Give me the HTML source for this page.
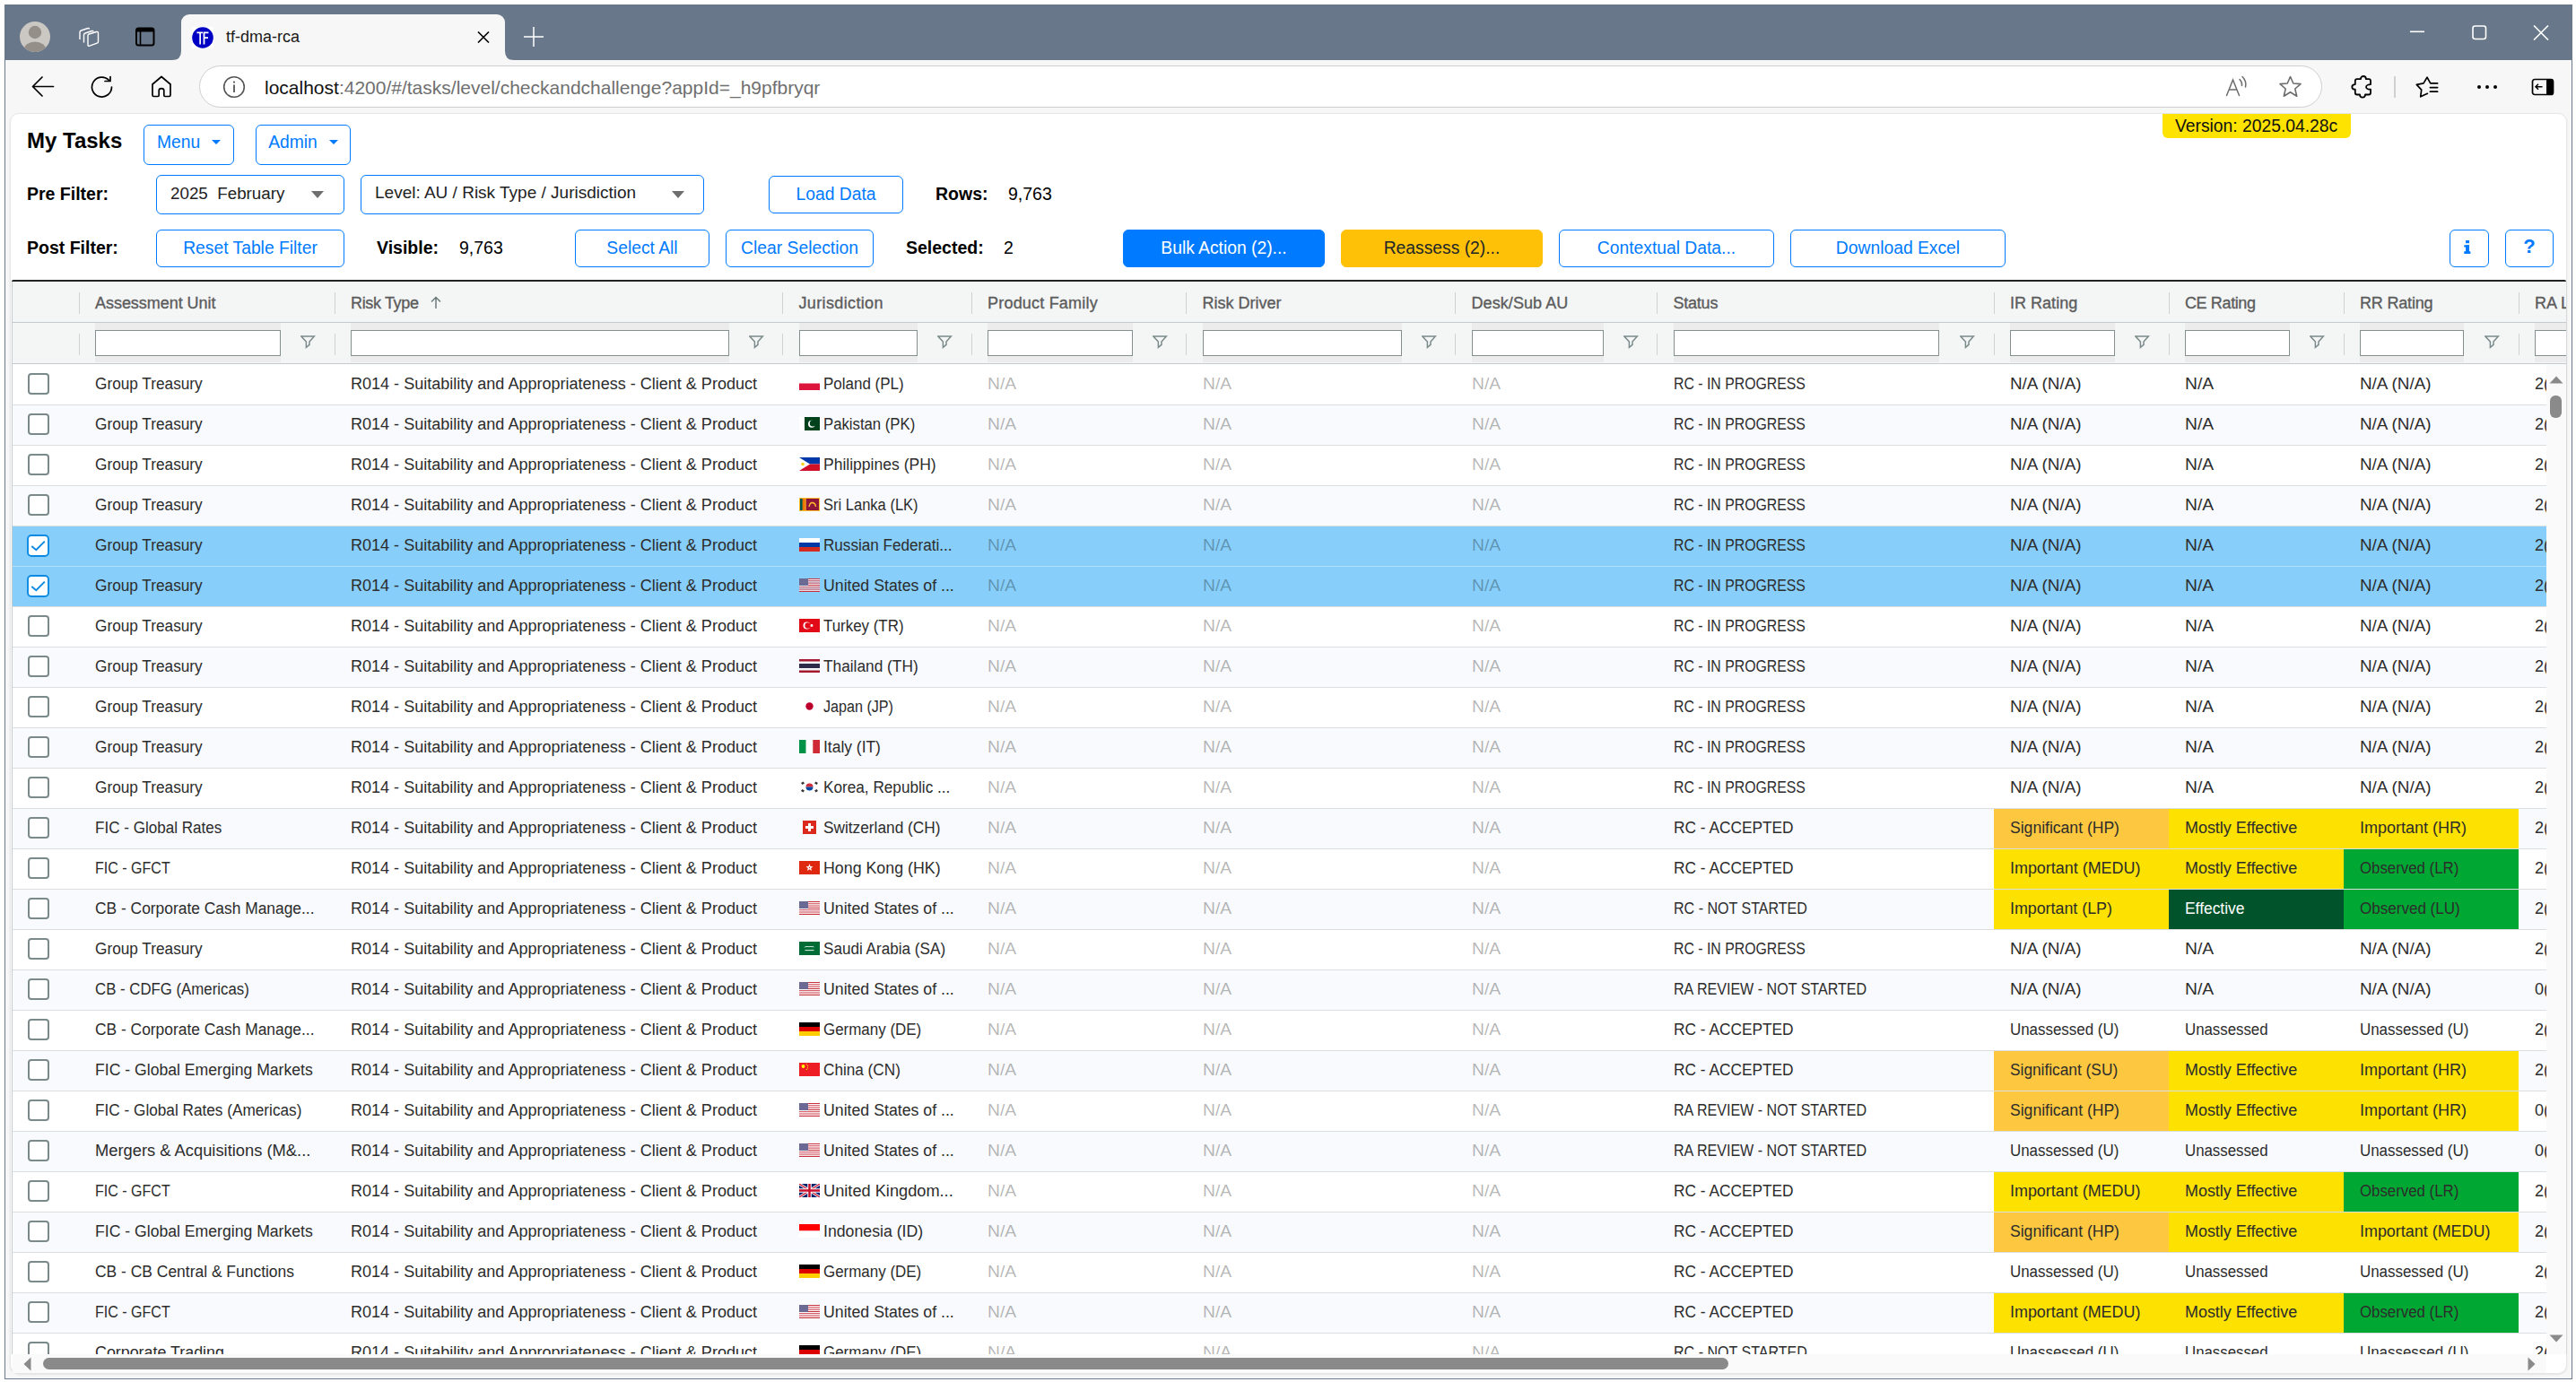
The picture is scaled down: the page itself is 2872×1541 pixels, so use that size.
<!DOCTYPE html>
<html><head><meta charset="utf-8"><title>tf-dma-rca</title>
<style>
*{box-sizing:border-box;margin:0;padding:0}
html,body{width:2872px;height:1541px;overflow:hidden;background:#fff;font-family:"Liberation Sans",sans-serif}
.abs{position:absolute}
#win{position:absolute;left:5px;top:5px;width:2863px;height:1533px;background:#f7f7f7;border:1px solid #6b7a8f;border-top:none}
#tabstrip{position:absolute;left:5px;top:5px;width:2863px;height:62px;background:#687789}
#tab{position:absolute;left:202px;top:16px;width:361px;height:52px;background:#f7f7f7;border-radius:9px 9px 0 0}
#toolbar{position:absolute;left:6px;top:67px;width:2861px;height:60px;background:#f7f7f7}
#addr{position:absolute;left:222px;top:73px;width:2367px;height:47px;border:1px solid #cfcfcf;border-radius:24px;background:#fff}
#panel{position:absolute;left:11px;top:126px;width:2851px;height:1406px;background:#fff;border-radius:10px;border:1px solid #e6e6e6;overflow:hidden;box-shadow:0 1px 2px rgba(0,0,0,0.08)}
.btn{position:absolute;border:1.5px solid #007bff;border-radius:6px;color:#007bff;font-size:19.3px;text-align:center;background:#fff;white-space:nowrap}
.lbl{position:absolute;font-weight:bold;font-size:19.5px;color:#000;white-space:nowrap}
.val{position:absolute;font-size:19.5px;color:#000;white-space:nowrap}
.sel{position:absolute;border:1.5px solid #007bff;border-radius:6px;background:#fff;font-size:19.5px;color:#222;white-space:nowrap}
.hd{position:absolute;top:328px;font-size:18px;color:#5c5c5c;-webkit-text-stroke:0.35px #5c5c5c;white-space:nowrap}
.td{position:absolute;font-size:18px;color:#2c2c2c;white-space:nowrap;line-height:41px}
.cb{position:absolute;left:17px;width:24px;height:24px;border:2px solid #7a8989;border-radius:4px;background:#fff}
.caret{position:absolute;width:0;height:0;border-left:7px solid transparent;border-right:7px solid transparent;border-top:8px solid #6e6e6e}
</style></head>
<body>
<div id="tabstrip"></div>
<div id="toolbar"></div>
<div class="abs" style="left:5px;top:67px;width:1px;height:1471px;background:#6b7a8f"></div>
<div class="abs" style="left:2867px;top:67px;width:1px;height:1471px;background:#6b7a8f"></div>
<div class="abs" style="left:5px;top:1537px;width:2863px;height:1px;background:#6b7a8f"></div>
<div class="abs" style="left:6px;top:127px;width:2861px;height:1410px;background:#f7f7f7"></div>
<div id="tab"></div>
<svg class="abs" style="left:192px;top:57px" width="10" height="10"><path d="M0 10 Q10 10 10 0 L10 10Z" fill="#f7f7f7"/></svg>
<svg class="abs" style="left:563px;top:57px" width="10" height="10"><path d="M10 10 Q0 10 0 0 L0 10Z" fill="#f7f7f7"/></svg>
<svg class="abs" style="left:21px;top:23px" width="36" height="36" viewBox="0 0 36 36"><defs><clipPath id="avc"><circle cx="18" cy="18" r="17"/></clipPath></defs><circle cx="18" cy="18" r="17" fill="#cbc8c4"/><g clip-path="url(#avc)"><circle cx="18" cy="13" r="7.2" fill="#958f8a"/><ellipse cx="18" cy="33" rx="12.5" ry="9.5" fill="#958f8a"/></g></svg>
<svg class="abs" style="left:86px;top:28px" width="27" height="26" viewBox="0 0 27 26" fill="none" stroke="#fff" stroke-width="1.4" stroke-linejoin="round"><path d="M3 16 V8 Q3 6.5 4.5 6 L12 3.5 Q13.5 3.2 13.5 4.5"/><path d="M7.5 19.5 V11 Q7.5 9.5 9 9 L16.5 6.5 Q18 6.2 18 7.5"/><path d="M12 11.5 Q12 10.5 13.2 10 L21.5 7.5 Q23.5 7 23.5 8.8 V18.5 Q23.5 19.8 22.2 20.2 L13.8 23.2 Q12 23.8 12 22 Z"/></svg>
<svg class="abs" style="left:150px;top:30px" width="24" height="22" viewBox="0 0 24 22"><rect x="2" y="1.5" width="19.5" height="19" rx="2.5" fill="none" stroke="#000" stroke-width="2"/><rect x="2" y="1.5" width="19.5" height="4" fill="#000"/><line x1="6.5" y1="5" x2="6.5" y2="20" stroke="#000" stroke-width="1.6"/></svg>
<div class="abs" style="left:214px;top:30px;width:24px;height:24px;background:#fff"></div>
<svg class="abs" style="left:214px;top:30px" width="24" height="24" viewBox="0 0 24 24"><circle cx="12" cy="12" r="11.8" fill="#0000c4"/><path d="M5.5 5.5 H12 V7.2 H10 V19.5 H8.3 V7.2 H5.5Z" fill="#fff"/><path d="M12.6 5.5 H18.5 V7.2 H14.4 V11.3 H18 V13 H14.4 V19.5 H12.6Z" fill="#fff"/></svg>
<div class="abs" style="left:252px;top:31px;font-size:18px;color:#1a1a1a;white-space:nowrap">tf-dma-rca</div>
<svg class="abs" style="left:532px;top:35px" width="14" height="13" viewBox="0 0 14 13"><path d="M1 0.5 L13 12.5 M13 0.5 L1 12.5" stroke="#000" stroke-width="1.6"/></svg>
<svg class="abs" style="left:584px;top:30px" width="22" height="22" viewBox="0 0 22 22"><path d="M11 0 V22 M0 11 H22" stroke="#fff" stroke-width="1.5"/></svg>
<svg class="abs" style="left:2687px;top:34px" width="17" height="3"><rect x="0" y="0.5" width="16" height="1.6" fill="#fff"/></svg>
<svg class="abs" style="left:2756px;top:28px" width="17" height="17" viewBox="0 0 17 17"><rect x="1" y="1" width="14.5" height="14.5" rx="2.5" fill="none" stroke="#fff" stroke-width="1.6"/></svg>
<svg class="abs" style="left:2824px;top:28px" width="18" height="17" viewBox="0 0 18 17"><path d="M1 0.5 L17 16.5 M17 0.5 L1 16.5" stroke="#fff" stroke-width="1.6"/></svg>
<svg class="abs" style="left:35px;top:85px" width="26" height="23" viewBox="0 0 26 23" fill="none" stroke="#000" stroke-width="1.7" stroke-linecap="round" stroke-linejoin="round"><path d="M12 1 L1.5 11.5 L12 22 M1.5 11.5 H24.5"/></svg>
<svg class="abs" style="left:101px;top:84px" width="27" height="26" viewBox="0 0 27 26" fill="none" stroke="#000" stroke-width="1.7" stroke-linecap="round" stroke-linejoin="round"><path d="M23.5 13 A11 11 0 1 1 20.5 5.5"/><path d="M22 1.5 V6.5 H16"/></svg>
<svg class="abs" style="left:168px;top:84px" width="24" height="25" viewBox="0 0 24 25" fill="none" stroke="#000" stroke-width="1.7" stroke-linejoin="round"><path d="M2 10 L12 1.5 L22 10 V22 Q22 23.5 20.5 23.5 H16 Q14.8 23.5 14.8 22.3 V17 Q14.8 14.6 12 14.6 Q9.2 14.6 9.2 17 V22.3 Q9.2 23.5 8 23.5 H3.5 Q2 23.5 2 22 Z"/></svg>
<div id="addr"></div>
<svg class="abs" style="left:248px;top:84px" width="26" height="26" viewBox="0 0 26 26"><circle cx="13" cy="13" r="11.3" fill="none" stroke="#555" stroke-width="1.6"/><rect x="12.1" y="10.5" width="1.8" height="8.5" fill="#555"/><circle cx="13" cy="7.6" r="1.15" fill="#555"/></svg>
<div class="abs" style="left:295px;top:86px;font-size:21px;white-space:nowrap;color:#6f6f6f"><span style="color:#111">localhost</span>:4200/#/tasks/level/checkandchallenge?appId=_h9pfbryqr</div>
<svg class="abs" style="left:2481px;top:84px" width="26" height="24" viewBox="0 0 26 24" fill="none" stroke="#6d6d6d" stroke-width="1.5" stroke-linecap="round"><path d="M1.5 22.5 L8.5 5 L15.5 22.5 M4.3 16 H12.7"/><path d="M16 4.5 Q19 7.5 18.5 11.5"/><path d="M19 1.5 Q24 6.5 22.5 13"/></svg>
<svg class="abs" style="left:2540px;top:84px" width="27" height="26" viewBox="0 0 27 26" fill="none" stroke="#6d6d6d" stroke-width="1.6" stroke-linejoin="round"><path d="M13.5 1.5 L16.8 9 L25 9.6 L18.8 15 L20.7 23.2 L13.5 18.8 L6.3 23.2 L8.2 15 L2 9.6 L10.2 9 Z"/></svg>
<svg class="abs" style="left:2620px;top:84px" width="27" height="27" viewBox="0 0 27 27" fill="none" stroke="#000" stroke-width="1.8" stroke-linejoin="round"><path d="M5.8 6.2 Q5.8 4.2 7.8 4.2 H11.9 A3 3.2 0 0 1 17.9 4.2 H21 Q23 4.2 23 6.2 V10.1 A5 2.8 0 0 0 23 15.7 V19.5 Q23 21.5 21 21.5 H17 A3 3.2 0 0 1 11 21.5 H7.8 Q5.8 21.5 5.8 19.5 V15.7 A3.5 2.8 0 0 1 5.8 10.1 Z"/></svg>
<div class="abs" style="left:2669px;top:85px;width:2px;height:24px;background:#d0d0d0"></div>
<svg class="abs" style="left:2692px;top:84px" width="28" height="26" viewBox="0 0 28 26" fill="none" stroke="#000" stroke-width="1.7" stroke-linejoin="round" stroke-linecap="round"><path d="M25.6 8.9 H17.7 L14 2.2 L10 8.9 L2.3 10.3 L7.7 16.1 L6.7 23.8 L14.4 20.3 M17.4 13.6 H25.6 M17.4 18.2 H25.6"/></svg>
<svg class="abs" style="left:2761px;top:94px" width="24" height="6"><circle cx="3" cy="3" r="2" fill="#000"/><circle cx="12" cy="3" r="2" fill="#000"/><circle cx="21" cy="3" r="2" fill="#000"/></svg>
<svg class="abs" style="left:2822px;top:87px" width="26" height="20" viewBox="0 0 26 20"><rect x="1.5" y="1.5" width="23" height="17" rx="2.5" fill="none" stroke="#000" stroke-width="1.7"/><rect x="17" y="1.5" width="7.5" height="17" rx="1" fill="#000"/><path d="M5 9.8 H12.5 M8 6.8 L5 9.8 L8 12.8" fill="none" stroke="#000" stroke-width="1.5"/></svg>
<div id="panel"></div>
<div class="abs" style="left:2411px;top:127px;width:210px;height:27px;background:#ffe300;border-radius:0 0 6px 6px"></div>
<div class="abs" style="left:2425px;top:130px;font-size:19.3px;color:#111;white-space:nowrap">Version: 2025.04.28c</div>
<div class="abs" style="left:30px;top:143px;font-size:24px;font-weight:bold;color:#000;white-space:nowrap">My Tasks</div>
<div class="btn" style="left:160px;top:139px;width:101px;height:45px;line-height:38px;">Menu<span style="display:inline-block;width:0;height:0;border-left:5px solid transparent;border-right:5px solid transparent;border-top:5.5px solid #007bff;vertical-align:4px;margin-left:13px"></span></div>
<div class="btn" style="left:285px;top:139px;width:106px;height:45px;line-height:38px;">Admin<span style="display:inline-block;width:0;height:0;border-left:5px solid transparent;border-right:5px solid transparent;border-top:5.5px solid #007bff;vertical-align:4px;margin-left:13px"></span></div>
<div class="lbl" style="left:30px;top:205px">Pre Filter:</div>
<div class="lbl" style="left:30px;top:265px">Post Filter:</div>
<div class="sel" style="left:174px;top:195px;width:210px;height:44px"></div>
<div class="abs" style="left:190px;top:204.5px;font-size:18.8px;color:#222;white-space:pre">2025  February</div>
<div class="caret" style="left:347px;top:213px"></div>
<div class="sel" style="left:402px;top:195px;width:383px;height:44px"></div>
<div class="abs" style="left:418px;top:204px;font-size:19px;color:#222;white-space:pre">Level: AU / Risk Type / Jurisdiction</div>
<div class="caret" style="left:749px;top:213px"></div>
<div class="btn" style="left:857px;top:196px;width:150px;height:42px;line-height:39px;">Load Data</div>
<div class="lbl" style="left:1043px;top:205px">Rows:</div>
<div class="val" style="left:1124px;top:205px">9,763</div>
<div class="btn" style="left:174px;top:256px;width:210px;height:42px;line-height:39px;">Reset Table Filter</div>
<div class="lbl" style="left:420px;top:265px">Visible:</div>
<div class="val" style="left:512px;top:265px">9,763</div>
<div class="btn" style="left:641px;top:256px;width:150px;height:42px;line-height:39px;">Select All</div>
<div class="btn" style="left:809px;top:256px;width:165px;height:42px;line-height:39px;">Clear Selection</div>
<div class="lbl" style="left:1010px;top:265px">Selected:</div>
<div class="val" style="left:1119px;top:265px">2</div>
<div class="btn" style="left:1252px;top:256px;width:225px;height:42px;line-height:39px;background:#007bff;color:#fff">Bulk Action (2)...</div>
<div class="btn" style="left:1495px;top:256px;width:225px;height:42px;line-height:39px;background:#ffc107;border-color:#ffc107;color:#212529">Reassess (2)...</div>
<div class="btn" style="left:1738px;top:256px;width:240px;height:42px;line-height:39px;">Contextual Data...</div>
<div class="btn" style="left:1996px;top:256px;width:240px;height:42px;line-height:39px;">Download Excel</div>
<div class="btn" style="left:2731px;top:256px;width:44px;height:42px;line-height:39px;"></div>
<svg class="abs" style="left:2746px;top:267px" width="10" height="17" viewBox="0 0 10 17" fill="#007bff"><rect x="3" y="1" width="4" height="3.2"/><rect x="1.2" y="6.3" width="5.8" height="2.2"/><rect x="3" y="6.3" width="4" height="9.5"/><rect x="1.2" y="13.2" width="7.2" height="2.7" rx="0.5"/></svg>
<div class="btn" style="left:2793px;top:256px;width:54px;height:42px;line-height:39px;"><b style="font-family:'Liberation Mono',monospace;font-size:22px;position:relative;top:-1px">?</b></div>
<div class="abs" style="left:13px;top:312px;width:2848px;height:2px;background:#222;border-radius:2px 2px 0 0"></div>
<div class="abs" style="left:13px;top:314px;width:2848px;height:91px;background:#f4f6f6"></div>
<div class="abs" style="left:13px;top:359px;width:2848px;height:1px;background:#c3cbce"></div>
<div class="abs" style="left:13px;top:405px;width:2848px;height:1px;background:#c3cbce"></div>
<div class="abs" style="left:13px;top:314px;width:1px;height:1196px;background:#c5cccf"></div>
<div class="abs" style="left:0;top:0;width:2861px;height:406px;overflow:hidden">
<div class="abs" style="left:87.5px;top:326px;width:1px;height:24px;background:#cdd2d5"></div>
<div class="abs" style="left:87.5px;top:372px;width:1px;height:24px;background:#cdd2d5"></div>
<div class="hd" style="left:106.0px;letter-spacing:-0.039px;">Assessment Unit</div>
<div class="abs" style="left:106.0px;top:360px;width:206.7px;height:44px;background:#ececec"></div>
<div class="abs" style="left:106.0px;top:368px;width:206.7px;height:29px;background:#fff;border:1px solid #84908f"></div>
<svg class="abs" style="left:335.2px;top:374px" width="17" height="15" viewBox="0 0 17 15"><path d="M0.9 1.1 H15.3 L10 7 V10.4 L6.4 13.4 V7 Z" fill="none" stroke="#7b8a8a" stroke-width="1.5" stroke-linejoin="miter"/></svg>
<div class="abs" style="left:372.5px;top:326px;width:1px;height:24px;background:#cdd2d5"></div>
<div class="abs" style="left:372.5px;top:372px;width:1px;height:24px;background:#cdd2d5"></div>
<div class="hd" style="left:391.0px;letter-spacing:-0.351px;">Risk Type</div>
<div class="abs" style="left:391.0px;top:360px;width:421.6px;height:44px;background:#ececec"></div>
<div class="abs" style="left:391.0px;top:368px;width:421.6px;height:29px;background:#fff;border:1px solid #84908f"></div>
<svg class="abs" style="left:835.1px;top:374px" width="17" height="15" viewBox="0 0 17 15"><path d="M0.9 1.1 H15.3 L10 7 V10.4 L6.4 13.4 V7 Z" fill="none" stroke="#7b8a8a" stroke-width="1.5" stroke-linejoin="miter"/></svg>
<div class="abs" style="left:872.0px;top:326px;width:1px;height:24px;background:#cdd2d5"></div>
<div class="abs" style="left:872.0px;top:372px;width:1px;height:24px;background:#cdd2d5"></div>
<div class="hd" style="left:890.5px;letter-spacing:0.361px;">Jurisdiction</div>
<div class="abs" style="left:890.5px;top:360px;width:132.1px;height:44px;background:#ececec"></div>
<div class="abs" style="left:890.5px;top:368px;width:132.1px;height:29px;background:#fff;border:1px solid #84908f"></div>
<svg class="abs" style="left:1045.1px;top:374px" width="17" height="15" viewBox="0 0 17 15"><path d="M0.9 1.1 H15.3 L10 7 V10.4 L6.4 13.4 V7 Z" fill="none" stroke="#7b8a8a" stroke-width="1.5" stroke-linejoin="miter"/></svg>
<div class="abs" style="left:1082.5px;top:326px;width:1px;height:24px;background:#cdd2d5"></div>
<div class="abs" style="left:1082.5px;top:372px;width:1px;height:24px;background:#cdd2d5"></div>
<div class="hd" style="left:1101.0px;letter-spacing:0.205px;">Product Family</div>
<div class="abs" style="left:1101.0px;top:360px;width:161.7px;height:44px;background:#ececec"></div>
<div class="abs" style="left:1101.0px;top:368px;width:161.7px;height:29px;background:#fff;border:1px solid #84908f"></div>
<svg class="abs" style="left:1285.2px;top:374px" width="17" height="15" viewBox="0 0 17 15"><path d="M0.9 1.1 H15.3 L10 7 V10.4 L6.4 13.4 V7 Z" fill="none" stroke="#7b8a8a" stroke-width="1.5" stroke-linejoin="miter"/></svg>
<div class="abs" style="left:1322.0px;top:326px;width:1px;height:24px;background:#cdd2d5"></div>
<div class="abs" style="left:1322.0px;top:372px;width:1px;height:24px;background:#cdd2d5"></div>
<div class="hd" style="left:1340.5px;letter-spacing:0px;">Risk Driver</div>
<div class="abs" style="left:1340.5px;top:360px;width:222.0px;height:44px;background:#ececec"></div>
<div class="abs" style="left:1340.5px;top:368px;width:222.0px;height:29px;background:#fff;border:1px solid #84908f"></div>
<svg class="abs" style="left:1585.0px;top:374px" width="17" height="15" viewBox="0 0 17 15"><path d="M0.9 1.1 H15.3 L10 7 V10.4 L6.4 13.4 V7 Z" fill="none" stroke="#7b8a8a" stroke-width="1.5" stroke-linejoin="miter"/></svg>
<div class="abs" style="left:1622.0px;top:326px;width:1px;height:24px;background:#cdd2d5"></div>
<div class="abs" style="left:1622.0px;top:372px;width:1px;height:24px;background:#cdd2d5"></div>
<div class="hd" style="left:1640.5px;letter-spacing:0.076px;">Desk/Sub AU</div>
<div class="abs" style="left:1640.5px;top:360px;width:147.0px;height:44px;background:#ececec"></div>
<div class="abs" style="left:1640.5px;top:368px;width:147.0px;height:29px;background:#fff;border:1px solid #84908f"></div>
<svg class="abs" style="left:1810.0px;top:374px" width="17" height="15" viewBox="0 0 17 15"><path d="M0.9 1.1 H15.3 L10 7 V10.4 L6.4 13.4 V7 Z" fill="none" stroke="#7b8a8a" stroke-width="1.5" stroke-linejoin="miter"/></svg>
<div class="abs" style="left:1847.0px;top:326px;width:1px;height:24px;background:#cdd2d5"></div>
<div class="abs" style="left:1847.0px;top:372px;width:1px;height:24px;background:#cdd2d5"></div>
<div class="hd" style="left:1865.5px;letter-spacing:-0.226px;">Status</div>
<div class="abs" style="left:1865.5px;top:360px;width:296.5px;height:44px;background:#ececec"></div>
<div class="abs" style="left:1865.5px;top:368px;width:296.5px;height:29px;background:#fff;border:1px solid #84908f"></div>
<svg class="abs" style="left:2184.5px;top:374px" width="17" height="15" viewBox="0 0 17 15"><path d="M0.9 1.1 H15.3 L10 7 V10.4 L6.4 13.4 V7 Z" fill="none" stroke="#7b8a8a" stroke-width="1.5" stroke-linejoin="miter"/></svg>
<div class="abs" style="left:2222.5px;top:326px;width:1px;height:24px;background:#cdd2d5"></div>
<div class="abs" style="left:2222.5px;top:372px;width:1px;height:24px;background:#cdd2d5"></div>
<div class="hd" style="left:2241.0px;letter-spacing:0.022px;">IR Rating</div>
<div class="abs" style="left:2241.0px;top:360px;width:116.6px;height:44px;background:#ececec"></div>
<div class="abs" style="left:2241.0px;top:368px;width:116.6px;height:29px;background:#fff;border:1px solid #84908f"></div>
<svg class="abs" style="left:2380.1px;top:374px" width="17" height="15" viewBox="0 0 17 15"><path d="M0.9 1.1 H15.3 L10 7 V10.4 L6.4 13.4 V7 Z" fill="none" stroke="#7b8a8a" stroke-width="1.5" stroke-linejoin="miter"/></svg>
<div class="abs" style="left:2417.5px;top:326px;width:1px;height:24px;background:#cdd2d5"></div>
<div class="abs" style="left:2417.5px;top:372px;width:1px;height:24px;background:#cdd2d5"></div>
<div class="hd" style="left:2436.0px;letter-spacing:-0.378px;">CE Rating</div>
<div class="abs" style="left:2436.0px;top:360px;width:116.5px;height:44px;background:#ececec"></div>
<div class="abs" style="left:2436.0px;top:368px;width:116.5px;height:29px;background:#fff;border:1px solid #84908f"></div>
<svg class="abs" style="left:2575.0px;top:374px" width="17" height="15" viewBox="0 0 17 15"><path d="M0.9 1.1 H15.3 L10 7 V10.4 L6.4 13.4 V7 Z" fill="none" stroke="#7b8a8a" stroke-width="1.5" stroke-linejoin="miter"/></svg>
<div class="abs" style="left:2612.5px;top:326px;width:1px;height:24px;background:#cdd2d5"></div>
<div class="abs" style="left:2612.5px;top:372px;width:1px;height:24px;background:#cdd2d5"></div>
<div class="hd" style="left:2631.0px;letter-spacing:-0.177px;">RR Rating</div>
<div class="abs" style="left:2631.0px;top:360px;width:116.0px;height:44px;background:#ececec"></div>
<div class="abs" style="left:2631.0px;top:368px;width:116.0px;height:29px;background:#fff;border:1px solid #84908f"></div>
<svg class="abs" style="left:2769.5px;top:374px" width="17" height="15" viewBox="0 0 17 15"><path d="M0.9 1.1 H15.3 L10 7 V10.4 L6.4 13.4 V7 Z" fill="none" stroke="#7b8a8a" stroke-width="1.5" stroke-linejoin="miter"/></svg>
<div class="abs" style="left:2807.5px;top:326px;width:1px;height:24px;background:#cdd2d5"></div>
<div class="abs" style="left:2807.5px;top:372px;width:1px;height:24px;background:#cdd2d5"></div>
<div class="hd" style="left:2826.0px;letter-spacing:0px;">RA L</div>
<div class="abs" style="left:2826.0px;top:360px;width:124.0px;height:44px;background:#ececec"></div>
<div class="abs" style="left:2826.0px;top:368px;width:124.0px;height:29px;background:#fff;border:1px solid #84908f"></div>
<svg class="abs" style="left:2972.5px;top:374px" width="17" height="15" viewBox="0 0 17 15"><path d="M0.9 1.1 H15.3 L10 7 V10.4 L6.4 13.4 V7 Z" fill="none" stroke="#7b8a8a" stroke-width="1.5" stroke-linejoin="miter"/></svg>
</div>
<svg class="abs" style="left:480px;top:330px" width="12" height="15" viewBox="0 0 12 15" fill="none" stroke="#6d7b7b" stroke-width="1.5"><path d="M6 14 V1.5 M1 6.5 L6 1.5 L11 6.5"/></svg>
<div class="abs" style="left:14px;top:406px;width:2825px;height:1104px;overflow:hidden">
<div class="abs" style="left:0;top:0px;width:2825px;height:45px;background:#fff"></div>
<div class="abs" style="left:1px"></div>
<div class="abs" style="left:0;top:45px;width:2825px;height:45px;background:#f9fafd"></div>
<div class="abs" style="left:46px"></div>
<div class="abs" style="left:0;top:90px;width:2825px;height:45px;background:#fff"></div>
<div class="abs" style="left:91px"></div>
<div class="abs" style="left:0;top:135px;width:2825px;height:45px;background:#f9fafd"></div>
<div class="abs" style="left:136px"></div>
<div class="abs" style="left:0;top:180px;width:2825px;height:45px;background:#87cefa"></div>
<div class="abs" style="left:181px"></div>
<div class="abs" style="left:0;top:225px;width:2825px;height:45px;background:#87cefa"></div>
<div class="abs" style="left:226px"></div>
<div class="abs" style="left:0;top:270px;width:2825px;height:45px;background:#fff"></div>
<div class="abs" style="left:271px"></div>
<div class="abs" style="left:0;top:315px;width:2825px;height:45px;background:#f9fafd"></div>
<div class="abs" style="left:316px"></div>
<div class="abs" style="left:0;top:360px;width:2825px;height:45px;background:#fff"></div>
<div class="abs" style="left:361px"></div>
<div class="abs" style="left:0;top:405px;width:2825px;height:45px;background:#f9fafd"></div>
<div class="abs" style="left:406px"></div>
<div class="abs" style="left:0;top:450px;width:2825px;height:45px;background:#fff"></div>
<div class="abs" style="left:451px"></div>
<div class="abs" style="left:0;top:495px;width:2825px;height:45px;background:#f9fafd"></div>
<div class="abs" style="left:2208.5px;top:495px;width:195.0px;height:45px;background:#fdc83f"></div>
<div class="abs" style="left:2403.5px;top:495px;width:195.0px;height:45px;background:#fde100"></div>
<div class="abs" style="left:2598.5px;top:495px;width:195.0px;height:45px;background:#fde100"></div>
<div class="abs" style="left:496px"></div>
<div class="abs" style="left:0;top:540px;width:2825px;height:45px;background:#fff"></div>
<div class="abs" style="left:2208.5px;top:540px;width:195.0px;height:45px;background:#fde100"></div>
<div class="abs" style="left:2403.5px;top:540px;width:195.0px;height:45px;background:#fde100"></div>
<div class="abs" style="left:2598.5px;top:540px;width:195.0px;height:45px;background:#00a833"></div>
<div class="abs" style="left:541px"></div>
<div class="abs" style="left:0;top:585px;width:2825px;height:45px;background:#f9fafd"></div>
<div class="abs" style="left:2208.5px;top:585px;width:195.0px;height:45px;background:#fde100"></div>
<div class="abs" style="left:2403.5px;top:585px;width:195.0px;height:45px;background:#00532a"></div>
<div class="abs" style="left:2598.5px;top:585px;width:195.0px;height:45px;background:#00a833"></div>
<div class="abs" style="left:586px"></div>
<div class="abs" style="left:0;top:630px;width:2825px;height:45px;background:#fff"></div>
<div class="abs" style="left:631px"></div>
<div class="abs" style="left:0;top:675px;width:2825px;height:45px;background:#f9fafd"></div>
<div class="abs" style="left:676px"></div>
<div class="abs" style="left:0;top:720px;width:2825px;height:45px;background:#fff"></div>
<div class="abs" style="left:721px"></div>
<div class="abs" style="left:0;top:765px;width:2825px;height:45px;background:#f9fafd"></div>
<div class="abs" style="left:2208.5px;top:765px;width:195.0px;height:45px;background:#fdc83f"></div>
<div class="abs" style="left:2403.5px;top:765px;width:195.0px;height:45px;background:#fde100"></div>
<div class="abs" style="left:2598.5px;top:765px;width:195.0px;height:45px;background:#fde100"></div>
<div class="abs" style="left:766px"></div>
<div class="abs" style="left:0;top:810px;width:2825px;height:45px;background:#fff"></div>
<div class="abs" style="left:2208.5px;top:810px;width:195.0px;height:45px;background:#fdc83f"></div>
<div class="abs" style="left:2403.5px;top:810px;width:195.0px;height:45px;background:#fde100"></div>
<div class="abs" style="left:2598.5px;top:810px;width:195.0px;height:45px;background:#fde100"></div>
<div class="abs" style="left:811px"></div>
<div class="abs" style="left:0;top:855px;width:2825px;height:45px;background:#f9fafd"></div>
<div class="abs" style="left:856px"></div>
<div class="abs" style="left:0;top:900px;width:2825px;height:45px;background:#fff"></div>
<div class="abs" style="left:2208.5px;top:900px;width:195.0px;height:45px;background:#fde100"></div>
<div class="abs" style="left:2403.5px;top:900px;width:195.0px;height:45px;background:#fde100"></div>
<div class="abs" style="left:2598.5px;top:900px;width:195.0px;height:45px;background:#00a833"></div>
<div class="abs" style="left:901px"></div>
<div class="abs" style="left:0;top:945px;width:2825px;height:45px;background:#f9fafd"></div>
<div class="abs" style="left:2208.5px;top:945px;width:195.0px;height:45px;background:#fdc83f"></div>
<div class="abs" style="left:2403.5px;top:945px;width:195.0px;height:45px;background:#fde100"></div>
<div class="abs" style="left:2598.5px;top:945px;width:195.0px;height:45px;background:#fde100"></div>
<div class="abs" style="left:946px"></div>
<div class="abs" style="left:0;top:990px;width:2825px;height:45px;background:#fff"></div>
<div class="abs" style="left:991px"></div>
<div class="abs" style="left:0;top:1035px;width:2825px;height:45px;background:#f9fafd"></div>
<div class="abs" style="left:2208.5px;top:1035px;width:195.0px;height:45px;background:#fde100"></div>
<div class="abs" style="left:2403.5px;top:1035px;width:195.0px;height:45px;background:#fde100"></div>
<div class="abs" style="left:2598.5px;top:1035px;width:195.0px;height:45px;background:#00a833"></div>
<div class="abs" style="left:1036px"></div>
<div class="abs" style="left:0;top:1080px;width:2825px;height:45px;background:#fff"></div>
<div class="abs" style="left:1081px"></div>
<div class="abs" style="left:0;top:45px;width:2825px;height:1px;background:#dcdfe2"></div>
<div class="abs" style="left:0;top:90px;width:2825px;height:1px;background:#dcdfe2"></div>
<div class="abs" style="left:0;top:135px;width:2825px;height:1px;background:#dcdfe2"></div>
<div class="abs" style="left:0;top:180px;width:2825px;height:1px;background:#dcdfe2"></div>
<div class="abs" style="left:0;top:225px;width:2825px;height:1px;background:#b3e0fc"></div>
<div class="abs" style="left:0;top:270px;width:2825px;height:1px;background:#dcdfe2"></div>
<div class="abs" style="left:0;top:315px;width:2825px;height:1px;background:#dcdfe2"></div>
<div class="abs" style="left:0;top:360px;width:2825px;height:1px;background:#dcdfe2"></div>
<div class="abs" style="left:0;top:405px;width:2825px;height:1px;background:#dcdfe2"></div>
<div class="abs" style="left:0;top:450px;width:2825px;height:1px;background:#dcdfe2"></div>
<div class="abs" style="left:0;top:495px;width:2825px;height:1px;background:#dcdfe2"></div>
<div class="abs" style="left:0;top:540px;width:2825px;height:1px;background:#dcdfe2"></div>
<div class="abs" style="left:0;top:585px;width:2825px;height:1px;background:#dcdfe2"></div>
<div class="abs" style="left:0;top:630px;width:2825px;height:1px;background:#dcdfe2"></div>
<div class="abs" style="left:0;top:675px;width:2825px;height:1px;background:#dcdfe2"></div>
<div class="abs" style="left:0;top:720px;width:2825px;height:1px;background:#dcdfe2"></div>
<div class="abs" style="left:0;top:765px;width:2825px;height:1px;background:#dcdfe2"></div>
<div class="abs" style="left:0;top:810px;width:2825px;height:1px;background:#dcdfe2"></div>
<div class="abs" style="left:0;top:855px;width:2825px;height:1px;background:#dcdfe2"></div>
<div class="abs" style="left:0;top:900px;width:2825px;height:1px;background:#dcdfe2"></div>
<div class="abs" style="left:0;top:945px;width:2825px;height:1px;background:#dcdfe2"></div>
<div class="abs" style="left:0;top:990px;width:2825px;height:1px;background:#dcdfe2"></div>
<div class="abs" style="left:0;top:1035px;width:2825px;height:1px;background:#dcdfe2"></div>
<div class="abs" style="left:0;top:1080px;width:2825px;height:1px;background:#dcdfe2"></div>
<div class="abs" style="left:0;top:1125px;width:2825px;height:1px;background:#dcdfe2"></div>
<div class="cb" style="top:10px"></div>
<div class="td" style="left:92.0px;top:2px;transform:scaleX(0.9571);transform-origin:0 0;">Group Treasury</div>
<div class="td" style="left:377.0px;top:2px;transform:scaleX(1.0017);transform-origin:0 0;">R014 - Suitability and Appropriateness - Client &amp; Product</div>
<div class="abs" style="left:876.5px;top:14px;width:23px;height:15px"><svg width="23" height="15" viewBox="0 0 23 15" style="display:block"><rect width="23" height="7.5" fill="#fff"/><rect y="7.5" width="23" height="7.5" fill="#dc143c"/></svg></div>
<div class="td" style="left:876.5px;top:2px;transform:scaleX(0.9435);transform-origin:0 0;margin-left:27px">Poland (PL)</div>
<div class="td" style="left:1087.0px;top:2px;color:rgba(0,0,0,0.3);transform:scaleX(1.069);transform-origin:0 0;">N/A</div>
<div class="td" style="left:1326.5px;top:2px;color:rgba(0,0,0,0.3);transform:scaleX(1.069);transform-origin:0 0;">N/A</div>
<div class="td" style="left:1626.5px;top:2px;color:rgba(0,0,0,0.3);transform:scaleX(1.069);transform-origin:0 0;">N/A</div>
<div class="td" style="left:1851.5px;top:2px;transform:scaleX(0.8795);transform-origin:0 0;">RC - IN PROGRESS</div>
<div class="td" style="left:2227.0px;top:2px;transform:scaleX(1.0466);transform-origin:0 0;">N/A (N/A)</div>
<div class="td" style="left:2422.0px;top:2px;transform:scaleX(1.069);transform-origin:0 0;">N/A</div>
<div class="td" style="left:2617.0px;top:2px;transform:scaleX(1.0466);transform-origin:0 0;">N/A (N/A)</div>
<div class="td" style="left:2812.0px;top:2px;letter-spacing:0px;">2(</div>
<div class="cb" style="top:55px"></div>
<div class="td" style="left:92.0px;top:47px;transform:scaleX(0.9571);transform-origin:0 0;">Group Treasury</div>
<div class="td" style="left:377.0px;top:47px;transform:scaleX(1.0017);transform-origin:0 0;">R014 - Suitability and Appropriateness - Client &amp; Product</div>
<div class="abs" style="left:876.5px;top:59px;width:23px;height:15px"><svg width="23" height="15" viewBox="0 0 23 15" style="display:block"><rect width="23" height="15" fill="#fff"/><rect x="6" width="17" height="15" fill="#01411c"/><circle cx="14" cy="7.8" r="4" fill="#fff"/><circle cx="15.3" cy="6.9" r="3.5" fill="#01411c"/></svg></div>
<div class="td" style="left:876.5px;top:47px;transform:scaleX(0.9292);transform-origin:0 0;margin-left:27px">Pakistan (PK)</div>
<div class="td" style="left:1087.0px;top:47px;color:rgba(0,0,0,0.3);transform:scaleX(1.069);transform-origin:0 0;">N/A</div>
<div class="td" style="left:1326.5px;top:47px;color:rgba(0,0,0,0.3);transform:scaleX(1.069);transform-origin:0 0;">N/A</div>
<div class="td" style="left:1626.5px;top:47px;color:rgba(0,0,0,0.3);transform:scaleX(1.069);transform-origin:0 0;">N/A</div>
<div class="td" style="left:1851.5px;top:47px;transform:scaleX(0.8795);transform-origin:0 0;">RC - IN PROGRESS</div>
<div class="td" style="left:2227.0px;top:47px;transform:scaleX(1.0466);transform-origin:0 0;">N/A (N/A)</div>
<div class="td" style="left:2422.0px;top:47px;transform:scaleX(1.069);transform-origin:0 0;">N/A</div>
<div class="td" style="left:2617.0px;top:47px;transform:scaleX(1.0466);transform-origin:0 0;">N/A (N/A)</div>
<div class="td" style="left:2812.0px;top:47px;letter-spacing:0px;">2(</div>
<div class="cb" style="top:100px"></div>
<div class="td" style="left:92.0px;top:92px;transform:scaleX(0.9571);transform-origin:0 0;">Group Treasury</div>
<div class="td" style="left:377.0px;top:92px;transform:scaleX(1.0017);transform-origin:0 0;">R014 - Suitability and Appropriateness - Client &amp; Product</div>
<div class="abs" style="left:876.5px;top:104px;width:23px;height:15px"><svg width="23" height="15" viewBox="0 0 23 15" style="display:block"><rect width="23" height="7.5" fill="#0038a8"/><rect y="7.5" width="23" height="7.5" fill="#ce1126"/><path d="M0 0 L12 7.5 L0 15Z" fill="#fff"/><circle cx="4" cy="7.5" r="1.8" fill="#fcd116"/></svg></div>
<div class="td" style="left:876.5px;top:92px;transform:scaleX(0.9736);transform-origin:0 0;margin-left:27px">Philippines (PH)</div>
<div class="td" style="left:1087.0px;top:92px;color:rgba(0,0,0,0.3);transform:scaleX(1.069);transform-origin:0 0;">N/A</div>
<div class="td" style="left:1326.5px;top:92px;color:rgba(0,0,0,0.3);transform:scaleX(1.069);transform-origin:0 0;">N/A</div>
<div class="td" style="left:1626.5px;top:92px;color:rgba(0,0,0,0.3);transform:scaleX(1.069);transform-origin:0 0;">N/A</div>
<div class="td" style="left:1851.5px;top:92px;transform:scaleX(0.8795);transform-origin:0 0;">RC - IN PROGRESS</div>
<div class="td" style="left:2227.0px;top:92px;transform:scaleX(1.0466);transform-origin:0 0;">N/A (N/A)</div>
<div class="td" style="left:2422.0px;top:92px;transform:scaleX(1.069);transform-origin:0 0;">N/A</div>
<div class="td" style="left:2617.0px;top:92px;transform:scaleX(1.0466);transform-origin:0 0;">N/A (N/A)</div>
<div class="td" style="left:2812.0px;top:92px;letter-spacing:0px;">2(</div>
<div class="cb" style="top:145px"></div>
<div class="td" style="left:92.0px;top:137px;transform:scaleX(0.9571);transform-origin:0 0;">Group Treasury</div>
<div class="td" style="left:377.0px;top:137px;transform:scaleX(1.0017);transform-origin:0 0;">R014 - Suitability and Appropriateness - Client &amp; Product</div>
<div class="abs" style="left:876.5px;top:149px;width:23px;height:15px"><svg width="23" height="15" viewBox="0 0 23 15" style="display:block"><rect width="23" height="15" fill="#ffbe29"/><rect x="1" y="1" width="2.8" height="13" fill="#00534e"/><rect x="3.8" y="1" width="2.8" height="13" fill="#eb7400"/><rect x="7.6" y="1" width="14.4" height="13" fill="#8d153a"/><path d="M11 10 Q12 5 15 5.5 Q18 6 18.5 10" fill="none" stroke="#ffbe29" stroke-width="1.4"/></svg></div>
<div class="td" style="left:876.5px;top:137px;transform:scaleX(0.918);transform-origin:0 0;margin-left:27px">Sri Lanka (LK)</div>
<div class="td" style="left:1087.0px;top:137px;color:rgba(0,0,0,0.3);transform:scaleX(1.069);transform-origin:0 0;">N/A</div>
<div class="td" style="left:1326.5px;top:137px;color:rgba(0,0,0,0.3);transform:scaleX(1.069);transform-origin:0 0;">N/A</div>
<div class="td" style="left:1626.5px;top:137px;color:rgba(0,0,0,0.3);transform:scaleX(1.069);transform-origin:0 0;">N/A</div>
<div class="td" style="left:1851.5px;top:137px;transform:scaleX(0.8795);transform-origin:0 0;">RC - IN PROGRESS</div>
<div class="td" style="left:2227.0px;top:137px;transform:scaleX(1.0466);transform-origin:0 0;">N/A (N/A)</div>
<div class="td" style="left:2422.0px;top:137px;transform:scaleX(1.069);transform-origin:0 0;">N/A</div>
<div class="td" style="left:2617.0px;top:137px;transform:scaleX(1.0466);transform-origin:0 0;">N/A (N/A)</div>
<div class="td" style="left:2812.0px;top:137px;letter-spacing:0px;">2(</div>
<svg class="abs" style="left:16px;top:190px" width="25" height="25" viewBox="0 0 25 25"><rect x="1" y="1" width="23" height="23" rx="4" fill="#fff" stroke="#0a8ae2" stroke-width="1.9"/><path d="M5.3 13 L10.3 17.2 L19.8 7.6" fill="none" stroke="#0a8ae2" stroke-width="1.9"/></svg>
<div class="td" style="left:92.0px;top:182px;transform:scaleX(0.9571);transform-origin:0 0;">Group Treasury</div>
<div class="td" style="left:377.0px;top:182px;transform:scaleX(1.0017);transform-origin:0 0;">R014 - Suitability and Appropriateness - Client &amp; Product</div>
<div class="abs" style="left:876.5px;top:194px;width:23px;height:15px"><svg width="23" height="15" viewBox="0 0 23 15" style="display:block"><rect width="23" height="5" fill="#fff"/><rect y="5" width="23" height="5" fill="#0039a6"/><rect y="10" width="23" height="5" fill="#d52b1e"/></svg></div>
<div class="td" style="left:876.5px;top:182px;transform:scaleX(0.9499);transform-origin:0 0;margin-left:27px">Russian Federati...</div>
<div class="td" style="left:1087.0px;top:182px;color:rgba(0,0,0,0.3);transform:scaleX(1.069);transform-origin:0 0;">N/A</div>
<div class="td" style="left:1326.5px;top:182px;color:rgba(0,0,0,0.3);transform:scaleX(1.069);transform-origin:0 0;">N/A</div>
<div class="td" style="left:1626.5px;top:182px;color:rgba(0,0,0,0.3);transform:scaleX(1.069);transform-origin:0 0;">N/A</div>
<div class="td" style="left:1851.5px;top:182px;transform:scaleX(0.8795);transform-origin:0 0;">RC - IN PROGRESS</div>
<div class="td" style="left:2227.0px;top:182px;transform:scaleX(1.0466);transform-origin:0 0;">N/A (N/A)</div>
<div class="td" style="left:2422.0px;top:182px;transform:scaleX(1.069);transform-origin:0 0;">N/A</div>
<div class="td" style="left:2617.0px;top:182px;transform:scaleX(1.0466);transform-origin:0 0;">N/A (N/A)</div>
<div class="td" style="left:2812.0px;top:182px;letter-spacing:0px;">2(</div>
<svg class="abs" style="left:16px;top:235px" width="25" height="25" viewBox="0 0 25 25"><rect x="1" y="1" width="23" height="23" rx="4" fill="#fff" stroke="#0a8ae2" stroke-width="1.9"/><path d="M5.3 13 L10.3 17.2 L19.8 7.6" fill="none" stroke="#0a8ae2" stroke-width="1.9"/></svg>
<div class="td" style="left:92.0px;top:227px;transform:scaleX(0.9571);transform-origin:0 0;">Group Treasury</div>
<div class="td" style="left:377.0px;top:227px;transform:scaleX(1.0017);transform-origin:0 0;">R014 - Suitability and Appropriateness - Client &amp; Product</div>
<div class="abs" style="left:876.5px;top:239px;width:23px;height:15px"><svg width="23" height="15" viewBox="0 0 23 15" style="display:block"><rect x="0" y="0.000" width="23" height="1.154" fill="#c8313e"/><rect x="0" y="1.154" width="23" height="1.154" fill="#fff"/><rect x="0" y="2.308" width="23" height="1.154" fill="#c8313e"/><rect x="0" y="3.462" width="23" height="1.154" fill="#fff"/><rect x="0" y="4.615" width="23" height="1.154" fill="#c8313e"/><rect x="0" y="5.769" width="23" height="1.154" fill="#fff"/><rect x="0" y="6.923" width="23" height="1.154" fill="#c8313e"/><rect x="0" y="8.077" width="23" height="1.154" fill="#fff"/><rect x="0" y="9.231" width="23" height="1.154" fill="#c8313e"/><rect x="0" y="10.385" width="23" height="1.154" fill="#fff"/><rect x="0" y="11.538" width="23" height="1.154" fill="#c8313e"/><rect x="0" y="12.692" width="23" height="1.154" fill="#fff"/><rect x="0" y="13.846" width="23" height="1.154" fill="#c8313e"/><rect width="10" height="8" fill="#3c3b6e"/><rect width="10" height="8" fill="#bfc3e0" opacity="0.35"/></svg></div>
<div class="td" style="left:876.5px;top:227px;transform:scaleX(0.9844);transform-origin:0 0;margin-left:27px">United States of ...</div>
<div class="td" style="left:1087.0px;top:227px;color:rgba(0,0,0,0.3);transform:scaleX(1.069);transform-origin:0 0;">N/A</div>
<div class="td" style="left:1326.5px;top:227px;color:rgba(0,0,0,0.3);transform:scaleX(1.069);transform-origin:0 0;">N/A</div>
<div class="td" style="left:1626.5px;top:227px;color:rgba(0,0,0,0.3);transform:scaleX(1.069);transform-origin:0 0;">N/A</div>
<div class="td" style="left:1851.5px;top:227px;transform:scaleX(0.8795);transform-origin:0 0;">RC - IN PROGRESS</div>
<div class="td" style="left:2227.0px;top:227px;transform:scaleX(1.0466);transform-origin:0 0;">N/A (N/A)</div>
<div class="td" style="left:2422.0px;top:227px;transform:scaleX(1.069);transform-origin:0 0;">N/A</div>
<div class="td" style="left:2617.0px;top:227px;transform:scaleX(1.0466);transform-origin:0 0;">N/A (N/A)</div>
<div class="td" style="left:2812.0px;top:227px;letter-spacing:0px;">2(</div>
<div class="cb" style="top:280px"></div>
<div class="td" style="left:92.0px;top:272px;transform:scaleX(0.9571);transform-origin:0 0;">Group Treasury</div>
<div class="td" style="left:377.0px;top:272px;transform:scaleX(1.0017);transform-origin:0 0;">R014 - Suitability and Appropriateness - Client &amp; Product</div>
<div class="abs" style="left:876.5px;top:284px;width:23px;height:15px"><svg width="23" height="15" viewBox="0 0 23 15" style="display:block"><rect width="23" height="15" fill="#e30a17"/><circle cx="8.5" cy="7.5" r="4" fill="#fff"/><circle cx="9.6" cy="7.5" r="3.2" fill="#e30a17"/><circle cx="14" cy="7.5" r="1.4" fill="#fff"/></svg></div>
<div class="td" style="left:876.5px;top:272px;transform:scaleX(0.9392);transform-origin:0 0;margin-left:27px">Turkey (TR)</div>
<div class="td" style="left:1087.0px;top:272px;color:rgba(0,0,0,0.3);transform:scaleX(1.069);transform-origin:0 0;">N/A</div>
<div class="td" style="left:1326.5px;top:272px;color:rgba(0,0,0,0.3);transform:scaleX(1.069);transform-origin:0 0;">N/A</div>
<div class="td" style="left:1626.5px;top:272px;color:rgba(0,0,0,0.3);transform:scaleX(1.069);transform-origin:0 0;">N/A</div>
<div class="td" style="left:1851.5px;top:272px;transform:scaleX(0.8795);transform-origin:0 0;">RC - IN PROGRESS</div>
<div class="td" style="left:2227.0px;top:272px;transform:scaleX(1.0466);transform-origin:0 0;">N/A (N/A)</div>
<div class="td" style="left:2422.0px;top:272px;transform:scaleX(1.069);transform-origin:0 0;">N/A</div>
<div class="td" style="left:2617.0px;top:272px;transform:scaleX(1.0466);transform-origin:0 0;">N/A (N/A)</div>
<div class="td" style="left:2812.0px;top:272px;letter-spacing:0px;">2(</div>
<div class="cb" style="top:325px"></div>
<div class="td" style="left:92.0px;top:317px;transform:scaleX(0.9571);transform-origin:0 0;">Group Treasury</div>
<div class="td" style="left:377.0px;top:317px;transform:scaleX(1.0017);transform-origin:0 0;">R014 - Suitability and Appropriateness - Client &amp; Product</div>
<div class="abs" style="left:876.5px;top:329px;width:23px;height:15px"><svg width="23" height="15" viewBox="0 0 23 15" style="display:block"><rect width="23" height="15" fill="#a51931"/><rect y="2.5" width="23" height="10" fill="#f4f5f8"/><rect y="5" width="23" height="5" fill="#2d2a4a"/></svg></div>
<div class="td" style="left:876.5px;top:317px;transform:scaleX(0.9602);transform-origin:0 0;margin-left:27px">Thailand (TH)</div>
<div class="td" style="left:1087.0px;top:317px;color:rgba(0,0,0,0.3);transform:scaleX(1.069);transform-origin:0 0;">N/A</div>
<div class="td" style="left:1326.5px;top:317px;color:rgba(0,0,0,0.3);transform:scaleX(1.069);transform-origin:0 0;">N/A</div>
<div class="td" style="left:1626.5px;top:317px;color:rgba(0,0,0,0.3);transform:scaleX(1.069);transform-origin:0 0;">N/A</div>
<div class="td" style="left:1851.5px;top:317px;transform:scaleX(0.8795);transform-origin:0 0;">RC - IN PROGRESS</div>
<div class="td" style="left:2227.0px;top:317px;transform:scaleX(1.0466);transform-origin:0 0;">N/A (N/A)</div>
<div class="td" style="left:2422.0px;top:317px;transform:scaleX(1.069);transform-origin:0 0;">N/A</div>
<div class="td" style="left:2617.0px;top:317px;transform:scaleX(1.0466);transform-origin:0 0;">N/A (N/A)</div>
<div class="td" style="left:2812.0px;top:317px;letter-spacing:0px;">2(</div>
<div class="cb" style="top:370px"></div>
<div class="td" style="left:92.0px;top:362px;transform:scaleX(0.9571);transform-origin:0 0;">Group Treasury</div>
<div class="td" style="left:377.0px;top:362px;transform:scaleX(1.0017);transform-origin:0 0;">R014 - Suitability and Appropriateness - Client &amp; Product</div>
<div class="abs" style="left:876.5px;top:374px;width:23px;height:15px"><svg width="23" height="15" viewBox="0 0 23 15" style="display:block"><rect width="23" height="15" fill="#fff"/><circle cx="11.5" cy="7.5" r="4.2" fill="#bc002d"/></svg></div>
<div class="td" style="left:876.5px;top:362px;transform:scaleX(0.8961);transform-origin:0 0;margin-left:27px">Japan (JP)</div>
<div class="td" style="left:1087.0px;top:362px;color:rgba(0,0,0,0.3);transform:scaleX(1.069);transform-origin:0 0;">N/A</div>
<div class="td" style="left:1326.5px;top:362px;color:rgba(0,0,0,0.3);transform:scaleX(1.069);transform-origin:0 0;">N/A</div>
<div class="td" style="left:1626.5px;top:362px;color:rgba(0,0,0,0.3);transform:scaleX(1.069);transform-origin:0 0;">N/A</div>
<div class="td" style="left:1851.5px;top:362px;transform:scaleX(0.8795);transform-origin:0 0;">RC - IN PROGRESS</div>
<div class="td" style="left:2227.0px;top:362px;transform:scaleX(1.0466);transform-origin:0 0;">N/A (N/A)</div>
<div class="td" style="left:2422.0px;top:362px;transform:scaleX(1.069);transform-origin:0 0;">N/A</div>
<div class="td" style="left:2617.0px;top:362px;transform:scaleX(1.0466);transform-origin:0 0;">N/A (N/A)</div>
<div class="td" style="left:2812.0px;top:362px;letter-spacing:0px;">2(</div>
<div class="cb" style="top:415px"></div>
<div class="td" style="left:92.0px;top:407px;transform:scaleX(0.9571);transform-origin:0 0;">Group Treasury</div>
<div class="td" style="left:377.0px;top:407px;transform:scaleX(1.0017);transform-origin:0 0;">R014 - Suitability and Appropriateness - Client &amp; Product</div>
<div class="abs" style="left:876.5px;top:419px;width:23px;height:15px"><svg width="23" height="15" viewBox="0 0 23 15" style="display:block"><rect width="7.7" height="15" fill="#009246"/><rect x="7.7" width="7.6" height="15" fill="#fff"/><rect x="15.3" width="7.7" height="15" fill="#ce2b37"/></svg></div>
<div class="td" style="left:876.5px;top:407px;transform:scaleX(0.9687);transform-origin:0 0;margin-left:27px">Italy (IT)</div>
<div class="td" style="left:1087.0px;top:407px;color:rgba(0,0,0,0.3);transform:scaleX(1.069);transform-origin:0 0;">N/A</div>
<div class="td" style="left:1326.5px;top:407px;color:rgba(0,0,0,0.3);transform:scaleX(1.069);transform-origin:0 0;">N/A</div>
<div class="td" style="left:1626.5px;top:407px;color:rgba(0,0,0,0.3);transform:scaleX(1.069);transform-origin:0 0;">N/A</div>
<div class="td" style="left:1851.5px;top:407px;transform:scaleX(0.8795);transform-origin:0 0;">RC - IN PROGRESS</div>
<div class="td" style="left:2227.0px;top:407px;transform:scaleX(1.0466);transform-origin:0 0;">N/A (N/A)</div>
<div class="td" style="left:2422.0px;top:407px;transform:scaleX(1.069);transform-origin:0 0;">N/A</div>
<div class="td" style="left:2617.0px;top:407px;transform:scaleX(1.0466);transform-origin:0 0;">N/A (N/A)</div>
<div class="td" style="left:2812.0px;top:407px;letter-spacing:0px;">2(</div>
<div class="cb" style="top:460px"></div>
<div class="td" style="left:92.0px;top:452px;transform:scaleX(0.9571);transform-origin:0 0;">Group Treasury</div>
<div class="td" style="left:377.0px;top:452px;transform:scaleX(1.0017);transform-origin:0 0;">R014 - Suitability and Appropriateness - Client &amp; Product</div>
<div class="abs" style="left:876.5px;top:464px;width:23px;height:15px"><svg width="23" height="15" viewBox="0 0 23 15" style="display:block"><rect width="23" height="15" fill="#fff"/><path d="M7.5 7.5 A4 4 0 0 1 15.5 7.5Z" fill="#cd2e3a"/><path d="M7.5 7.5 A4 4 0 0 0 15.5 7.5Z" fill="#0047a0"/><rect x="2.5" y="2" width="3" height="2.5" fill="#333" transform="rotate(-33 4 3.2)"/><rect x="17.5" y="2" width="3" height="2.5" fill="#333" transform="rotate(33 19 3.2)"/><rect x="2.5" y="10.5" width="3" height="2.5" fill="#333" transform="rotate(33 4 11.7)"/><rect x="17.5" y="10.5" width="3" height="2.5" fill="#333" transform="rotate(-33 19 11.7)"/></svg></div>
<div class="td" style="left:876.5px;top:452px;transform:scaleX(0.9543);transform-origin:0 0;margin-left:27px">Korea, Republic ...</div>
<div class="td" style="left:1087.0px;top:452px;color:rgba(0,0,0,0.3);transform:scaleX(1.069);transform-origin:0 0;">N/A</div>
<div class="td" style="left:1326.5px;top:452px;color:rgba(0,0,0,0.3);transform:scaleX(1.069);transform-origin:0 0;">N/A</div>
<div class="td" style="left:1626.5px;top:452px;color:rgba(0,0,0,0.3);transform:scaleX(1.069);transform-origin:0 0;">N/A</div>
<div class="td" style="left:1851.5px;top:452px;transform:scaleX(0.8795);transform-origin:0 0;">RC - IN PROGRESS</div>
<div class="td" style="left:2227.0px;top:452px;transform:scaleX(1.0466);transform-origin:0 0;">N/A (N/A)</div>
<div class="td" style="left:2422.0px;top:452px;transform:scaleX(1.069);transform-origin:0 0;">N/A</div>
<div class="td" style="left:2617.0px;top:452px;transform:scaleX(1.0466);transform-origin:0 0;">N/A (N/A)</div>
<div class="td" style="left:2812.0px;top:452px;letter-spacing:0px;">2(</div>
<div class="cb" style="top:505px"></div>
<div class="td" style="left:92.0px;top:497px;transform:scaleX(0.9484);transform-origin:0 0;">FIC - Global Rates</div>
<div class="td" style="left:377.0px;top:497px;transform:scaleX(1.0017);transform-origin:0 0;">R014 - Suitability and Appropriateness - Client &amp; Product</div>
<div class="abs" style="left:876.5px;top:509px;width:23px;height:15px"><svg width="23" height="15" viewBox="0 0 23 15" style="display:block"><rect x="4" y="0" width="15" height="15" fill="#da291c"/><rect x="10" y="3" width="3" height="9" fill="#fff"/><rect x="7" y="6" width="9" height="3" fill="#fff"/></svg></div>
<div class="td" style="left:876.5px;top:497px;transform:scaleX(0.959);transform-origin:0 0;margin-left:27px">Switzerland (CH)</div>
<div class="td" style="left:1087.0px;top:497px;color:rgba(0,0,0,0.3);transform:scaleX(1.069);transform-origin:0 0;">N/A</div>
<div class="td" style="left:1326.5px;top:497px;color:rgba(0,0,0,0.3);transform:scaleX(1.069);transform-origin:0 0;">N/A</div>
<div class="td" style="left:1626.5px;top:497px;color:rgba(0,0,0,0.3);transform:scaleX(1.069);transform-origin:0 0;">N/A</div>
<div class="td" style="left:1851.5px;top:497px;transform:scaleX(0.9608);transform-origin:0 0;">RC - ACCEPTED</div>
<div class="td" style="left:2227.0px;top:497px;transform:scaleX(0.9754);transform-origin:0 0;">Significant (HP)</div>
<div class="td" style="left:2422.0px;top:497px;transform:scaleX(0.996);transform-origin:0 0;">Mostly Effective</div>
<div class="td" style="left:2617.0px;top:497px;transform:scaleX(0.9989);transform-origin:0 0;">Important (HR)</div>
<div class="td" style="left:2812.0px;top:497px;letter-spacing:0px;">2(</div>
<div class="cb" style="top:550px"></div>
<div class="td" style="left:92.0px;top:542px;transform:scaleX(0.8905);transform-origin:0 0;">FIC - GFCT</div>
<div class="td" style="left:377.0px;top:542px;transform:scaleX(1.0017);transform-origin:0 0;">R014 - Suitability and Appropriateness - Client &amp; Product</div>
<div class="abs" style="left:876.5px;top:554px;width:23px;height:15px"><svg width="23" height="15" viewBox="0 0 23 15" style="display:block"><rect width="23" height="15" fill="#de2910"/><polygon points="11.50,3.30 12.56,6.04 15.49,6.20 13.21,8.06 13.97,10.90 11.50,9.30 9.03,10.90 9.79,8.06 7.51,6.20 10.44,6.04" fill="#fff"/><circle cx="11.5" cy="7.5" r="0.7" fill="#de2910"/></svg></div>
<div class="td" style="left:876.5px;top:542px;transform:scaleX(0.9887);transform-origin:0 0;margin-left:27px">Hong Kong (HK)</div>
<div class="td" style="left:1087.0px;top:542px;color:rgba(0,0,0,0.3);transform:scaleX(1.069);transform-origin:0 0;">N/A</div>
<div class="td" style="left:1326.5px;top:542px;color:rgba(0,0,0,0.3);transform:scaleX(1.069);transform-origin:0 0;">N/A</div>
<div class="td" style="left:1626.5px;top:542px;color:rgba(0,0,0,0.3);transform:scaleX(1.069);transform-origin:0 0;">N/A</div>
<div class="td" style="left:1851.5px;top:542px;transform:scaleX(0.9608);transform-origin:0 0;">RC - ACCEPTED</div>
<div class="td" style="left:2227.0px;top:542px;transform:scaleX(0.9956);transform-origin:0 0;">Important (MEDU)</div>
<div class="td" style="left:2422.0px;top:542px;transform:scaleX(0.996);transform-origin:0 0;">Mostly Effective</div>
<div class="td" style="left:2617.0px;top:542px;transform:scaleX(0.9347);transform-origin:0 0;">Observed (LR)</div>
<div class="td" style="left:2812.0px;top:542px;letter-spacing:0px;">2(</div>
<div class="cb" style="top:595px"></div>
<div class="td" style="left:92.0px;top:587px;transform:scaleX(0.9658);transform-origin:0 0;">CB - Corporate Cash Manage...</div>
<div class="td" style="left:377.0px;top:587px;transform:scaleX(1.0017);transform-origin:0 0;">R014 - Suitability and Appropriateness - Client &amp; Product</div>
<div class="abs" style="left:876.5px;top:599px;width:23px;height:15px"><svg width="23" height="15" viewBox="0 0 23 15" style="display:block"><rect x="0" y="0.000" width="23" height="1.154" fill="#c8313e"/><rect x="0" y="1.154" width="23" height="1.154" fill="#fff"/><rect x="0" y="2.308" width="23" height="1.154" fill="#c8313e"/><rect x="0" y="3.462" width="23" height="1.154" fill="#fff"/><rect x="0" y="4.615" width="23" height="1.154" fill="#c8313e"/><rect x="0" y="5.769" width="23" height="1.154" fill="#fff"/><rect x="0" y="6.923" width="23" height="1.154" fill="#c8313e"/><rect x="0" y="8.077" width="23" height="1.154" fill="#fff"/><rect x="0" y="9.231" width="23" height="1.154" fill="#c8313e"/><rect x="0" y="10.385" width="23" height="1.154" fill="#fff"/><rect x="0" y="11.538" width="23" height="1.154" fill="#c8313e"/><rect x="0" y="12.692" width="23" height="1.154" fill="#fff"/><rect x="0" y="13.846" width="23" height="1.154" fill="#c8313e"/><rect width="10" height="8" fill="#3c3b6e"/><rect width="10" height="8" fill="#bfc3e0" opacity="0.35"/></svg></div>
<div class="td" style="left:876.5px;top:587px;transform:scaleX(0.9844);transform-origin:0 0;margin-left:27px">United States of ...</div>
<div class="td" style="left:1087.0px;top:587px;color:rgba(0,0,0,0.3);transform:scaleX(1.069);transform-origin:0 0;">N/A</div>
<div class="td" style="left:1326.5px;top:587px;color:rgba(0,0,0,0.3);transform:scaleX(1.069);transform-origin:0 0;">N/A</div>
<div class="td" style="left:1626.5px;top:587px;color:rgba(0,0,0,0.3);transform:scaleX(1.069);transform-origin:0 0;">N/A</div>
<div class="td" style="left:1851.5px;top:587px;transform:scaleX(0.8916);transform-origin:0 0;">RC - NOT STARTED</div>
<div class="td" style="left:2227.0px;top:587px;transform:scaleX(0.9899);transform-origin:0 0;">Important (LP)</div>
<div class="td" style="left:2422.0px;top:587px;color:#fff;transform:scaleX(0.9676);transform-origin:0 0;">Effective</div>
<div class="td" style="left:2617.0px;top:587px;transform:scaleX(0.9467);transform-origin:0 0;">Observed (LU)</div>
<div class="td" style="left:2812.0px;top:587px;letter-spacing:0px;">2(</div>
<div class="cb" style="top:640px"></div>
<div class="td" style="left:92.0px;top:632px;transform:scaleX(0.9571);transform-origin:0 0;">Group Treasury</div>
<div class="td" style="left:377.0px;top:632px;transform:scaleX(1.0017);transform-origin:0 0;">R014 - Suitability and Appropriateness - Client &amp; Product</div>
<div class="abs" style="left:876.5px;top:644px;width:23px;height:15px"><svg width="23" height="15" viewBox="0 0 23 15" style="display:block"><rect width="23" height="15" fill="#006c35"/><path d="M6 6.5 Q7 4.5 8 6 Q9 4 10 6 Q11 4.5 12 6 Q13 4 14 6 Q15 4.5 16.5 6" fill="none" stroke="#fff" stroke-width="0.9" opacity="0.9"/><rect x="6.5" y="9.2" width="10" height="0.9" fill="#fff"/></svg></div>
<div class="td" style="left:876.5px;top:632px;transform:scaleX(0.9512);transform-origin:0 0;margin-left:27px">Saudi Arabia (SA)</div>
<div class="td" style="left:1087.0px;top:632px;color:rgba(0,0,0,0.3);transform:scaleX(1.069);transform-origin:0 0;">N/A</div>
<div class="td" style="left:1326.5px;top:632px;color:rgba(0,0,0,0.3);transform:scaleX(1.069);transform-origin:0 0;">N/A</div>
<div class="td" style="left:1626.5px;top:632px;color:rgba(0,0,0,0.3);transform:scaleX(1.069);transform-origin:0 0;">N/A</div>
<div class="td" style="left:1851.5px;top:632px;transform:scaleX(0.8795);transform-origin:0 0;">RC - IN PROGRESS</div>
<div class="td" style="left:2227.0px;top:632px;transform:scaleX(1.0466);transform-origin:0 0;">N/A (N/A)</div>
<div class="td" style="left:2422.0px;top:632px;transform:scaleX(1.069);transform-origin:0 0;">N/A</div>
<div class="td" style="left:2617.0px;top:632px;transform:scaleX(1.0466);transform-origin:0 0;">N/A (N/A)</div>
<div class="td" style="left:2812.0px;top:632px;letter-spacing:0px;">2(</div>
<div class="cb" style="top:685px"></div>
<div class="td" style="left:92.0px;top:677px;transform:scaleX(0.9333);transform-origin:0 0;">CB - CDFG (Americas)</div>
<div class="td" style="left:377.0px;top:677px;transform:scaleX(1.0017);transform-origin:0 0;">R014 - Suitability and Appropriateness - Client &amp; Product</div>
<div class="abs" style="left:876.5px;top:689px;width:23px;height:15px"><svg width="23" height="15" viewBox="0 0 23 15" style="display:block"><rect x="0" y="0.000" width="23" height="1.154" fill="#c8313e"/><rect x="0" y="1.154" width="23" height="1.154" fill="#fff"/><rect x="0" y="2.308" width="23" height="1.154" fill="#c8313e"/><rect x="0" y="3.462" width="23" height="1.154" fill="#fff"/><rect x="0" y="4.615" width="23" height="1.154" fill="#c8313e"/><rect x="0" y="5.769" width="23" height="1.154" fill="#fff"/><rect x="0" y="6.923" width="23" height="1.154" fill="#c8313e"/><rect x="0" y="8.077" width="23" height="1.154" fill="#fff"/><rect x="0" y="9.231" width="23" height="1.154" fill="#c8313e"/><rect x="0" y="10.385" width="23" height="1.154" fill="#fff"/><rect x="0" y="11.538" width="23" height="1.154" fill="#c8313e"/><rect x="0" y="12.692" width="23" height="1.154" fill="#fff"/><rect x="0" y="13.846" width="23" height="1.154" fill="#c8313e"/><rect width="10" height="8" fill="#3c3b6e"/><rect width="10" height="8" fill="#bfc3e0" opacity="0.35"/></svg></div>
<div class="td" style="left:876.5px;top:677px;transform:scaleX(0.9844);transform-origin:0 0;margin-left:27px">United States of ...</div>
<div class="td" style="left:1087.0px;top:677px;color:rgba(0,0,0,0.3);transform:scaleX(1.069);transform-origin:0 0;">N/A</div>
<div class="td" style="left:1326.5px;top:677px;color:rgba(0,0,0,0.3);transform:scaleX(1.069);transform-origin:0 0;">N/A</div>
<div class="td" style="left:1626.5px;top:677px;color:rgba(0,0,0,0.3);transform:scaleX(1.069);transform-origin:0 0;">N/A</div>
<div class="td" style="left:1851.5px;top:677px;transform:scaleX(0.8925);transform-origin:0 0;">RA REVIEW - NOT STARTED</div>
<div class="td" style="left:2227.0px;top:677px;transform:scaleX(1.0466);transform-origin:0 0;">N/A (N/A)</div>
<div class="td" style="left:2422.0px;top:677px;transform:scaleX(1.069);transform-origin:0 0;">N/A</div>
<div class="td" style="left:2617.0px;top:677px;transform:scaleX(1.0466);transform-origin:0 0;">N/A (N/A)</div>
<div class="td" style="left:2812.0px;top:677px;letter-spacing:0px;">0(</div>
<div class="cb" style="top:730px"></div>
<div class="td" style="left:92.0px;top:722px;transform:scaleX(0.9658);transform-origin:0 0;">CB - Corporate Cash Manage...</div>
<div class="td" style="left:377.0px;top:722px;transform:scaleX(1.0017);transform-origin:0 0;">R014 - Suitability and Appropriateness - Client &amp; Product</div>
<div class="abs" style="left:876.5px;top:734px;width:23px;height:15px"><svg width="23" height="15" viewBox="0 0 23 15" style="display:block"><rect width="23" height="5" fill="#000"/><rect y="5" width="23" height="5" fill="#dd0000"/><rect y="10" width="23" height="5" fill="#ffce00"/></svg></div>
<div class="td" style="left:876.5px;top:722px;transform:scaleX(0.9416);transform-origin:0 0;margin-left:27px">Germany (DE)</div>
<div class="td" style="left:1087.0px;top:722px;color:rgba(0,0,0,0.3);transform:scaleX(1.069);transform-origin:0 0;">N/A</div>
<div class="td" style="left:1326.5px;top:722px;color:rgba(0,0,0,0.3);transform:scaleX(1.069);transform-origin:0 0;">N/A</div>
<div class="td" style="left:1626.5px;top:722px;color:rgba(0,0,0,0.3);transform:scaleX(1.069);transform-origin:0 0;">N/A</div>
<div class="td" style="left:1851.5px;top:722px;transform:scaleX(0.9608);transform-origin:0 0;">RC - ACCEPTED</div>
<div class="td" style="left:2227.0px;top:722px;transform:scaleX(0.9398);transform-origin:0 0;">Unassessed (U)</div>
<div class="td" style="left:2422.0px;top:722px;transform:scaleX(0.9346);transform-origin:0 0;">Unassessed</div>
<div class="td" style="left:2617.0px;top:722px;transform:scaleX(0.9398);transform-origin:0 0;">Unassessed (U)</div>
<div class="td" style="left:2812.0px;top:722px;letter-spacing:0px;">2(</div>
<div class="cb" style="top:775px"></div>
<div class="td" style="left:92.0px;top:767px;transform:scaleX(0.9787);transform-origin:0 0;">FIC - Global Emerging Markets</div>
<div class="td" style="left:377.0px;top:767px;transform:scaleX(1.0017);transform-origin:0 0;">R014 - Suitability and Appropriateness - Client &amp; Product</div>
<div class="abs" style="left:876.5px;top:779px;width:23px;height:15px"><svg width="23" height="15" viewBox="0 0 23 15" style="display:block"><rect width="23" height="15" fill="#ee1c25"/><circle cx="4.5" cy="4" r="1.9" fill="#ffff00"/><circle cx="8.3" cy="1.8" r="0.6" fill="#ffff00"/><circle cx="9.5" cy="3.6" r="0.6" fill="#ffff00"/><circle cx="9.5" cy="5.8" r="0.6" fill="#ffff00"/><circle cx="8.3" cy="7.4" r="0.6" fill="#ffff00"/></svg></div>
<div class="td" style="left:876.5px;top:767px;transform:scaleX(0.9537);transform-origin:0 0;margin-left:27px">China (CN)</div>
<div class="td" style="left:1087.0px;top:767px;color:rgba(0,0,0,0.3);transform:scaleX(1.069);transform-origin:0 0;">N/A</div>
<div class="td" style="left:1326.5px;top:767px;color:rgba(0,0,0,0.3);transform:scaleX(1.069);transform-origin:0 0;">N/A</div>
<div class="td" style="left:1626.5px;top:767px;color:rgba(0,0,0,0.3);transform:scaleX(1.069);transform-origin:0 0;">N/A</div>
<div class="td" style="left:1851.5px;top:767px;transform:scaleX(0.9608);transform-origin:0 0;">RC - ACCEPTED</div>
<div class="td" style="left:2227.0px;top:767px;transform:scaleX(0.9608);transform-origin:0 0;">Significant (SU)</div>
<div class="td" style="left:2422.0px;top:767px;transform:scaleX(0.996);transform-origin:0 0;">Mostly Effective</div>
<div class="td" style="left:2617.0px;top:767px;transform:scaleX(0.9989);transform-origin:0 0;">Important (HR)</div>
<div class="td" style="left:2812.0px;top:767px;letter-spacing:0px;">2(</div>
<div class="cb" style="top:820px"></div>
<div class="td" style="left:92.0px;top:812px;transform:scaleX(0.9558);transform-origin:0 0;">FIC - Global Rates (Americas)</div>
<div class="td" style="left:377.0px;top:812px;transform:scaleX(1.0017);transform-origin:0 0;">R014 - Suitability and Appropriateness - Client &amp; Product</div>
<div class="abs" style="left:876.5px;top:824px;width:23px;height:15px"><svg width="23" height="15" viewBox="0 0 23 15" style="display:block"><rect x="0" y="0.000" width="23" height="1.154" fill="#c8313e"/><rect x="0" y="1.154" width="23" height="1.154" fill="#fff"/><rect x="0" y="2.308" width="23" height="1.154" fill="#c8313e"/><rect x="0" y="3.462" width="23" height="1.154" fill="#fff"/><rect x="0" y="4.615" width="23" height="1.154" fill="#c8313e"/><rect x="0" y="5.769" width="23" height="1.154" fill="#fff"/><rect x="0" y="6.923" width="23" height="1.154" fill="#c8313e"/><rect x="0" y="8.077" width="23" height="1.154" fill="#fff"/><rect x="0" y="9.231" width="23" height="1.154" fill="#c8313e"/><rect x="0" y="10.385" width="23" height="1.154" fill="#fff"/><rect x="0" y="11.538" width="23" height="1.154" fill="#c8313e"/><rect x="0" y="12.692" width="23" height="1.154" fill="#fff"/><rect x="0" y="13.846" width="23" height="1.154" fill="#c8313e"/><rect width="10" height="8" fill="#3c3b6e"/><rect width="10" height="8" fill="#bfc3e0" opacity="0.35"/></svg></div>
<div class="td" style="left:876.5px;top:812px;transform:scaleX(0.9844);transform-origin:0 0;margin-left:27px">United States of ...</div>
<div class="td" style="left:1087.0px;top:812px;color:rgba(0,0,0,0.3);transform:scaleX(1.069);transform-origin:0 0;">N/A</div>
<div class="td" style="left:1326.5px;top:812px;color:rgba(0,0,0,0.3);transform:scaleX(1.069);transform-origin:0 0;">N/A</div>
<div class="td" style="left:1626.5px;top:812px;color:rgba(0,0,0,0.3);transform:scaleX(1.069);transform-origin:0 0;">N/A</div>
<div class="td" style="left:1851.5px;top:812px;transform:scaleX(0.8925);transform-origin:0 0;">RA REVIEW - NOT STARTED</div>
<div class="td" style="left:2227.0px;top:812px;transform:scaleX(0.9754);transform-origin:0 0;">Significant (HP)</div>
<div class="td" style="left:2422.0px;top:812px;transform:scaleX(0.996);transform-origin:0 0;">Mostly Effective</div>
<div class="td" style="left:2617.0px;top:812px;transform:scaleX(0.9989);transform-origin:0 0;">Important (HR)</div>
<div class="td" style="left:2812.0px;top:812px;letter-spacing:0px;">0(</div>
<div class="cb" style="top:865px"></div>
<div class="td" style="left:92.0px;top:857px;transform:scaleX(1.018);transform-origin:0 0;">Mergers &amp; Acquisitions (M&amp;...</div>
<div class="td" style="left:377.0px;top:857px;transform:scaleX(1.0017);transform-origin:0 0;">R014 - Suitability and Appropriateness - Client &amp; Product</div>
<div class="abs" style="left:876.5px;top:869px;width:23px;height:15px"><svg width="23" height="15" viewBox="0 0 23 15" style="display:block"><rect x="0" y="0.000" width="23" height="1.154" fill="#c8313e"/><rect x="0" y="1.154" width="23" height="1.154" fill="#fff"/><rect x="0" y="2.308" width="23" height="1.154" fill="#c8313e"/><rect x="0" y="3.462" width="23" height="1.154" fill="#fff"/><rect x="0" y="4.615" width="23" height="1.154" fill="#c8313e"/><rect x="0" y="5.769" width="23" height="1.154" fill="#fff"/><rect x="0" y="6.923" width="23" height="1.154" fill="#c8313e"/><rect x="0" y="8.077" width="23" height="1.154" fill="#fff"/><rect x="0" y="9.231" width="23" height="1.154" fill="#c8313e"/><rect x="0" y="10.385" width="23" height="1.154" fill="#fff"/><rect x="0" y="11.538" width="23" height="1.154" fill="#c8313e"/><rect x="0" y="12.692" width="23" height="1.154" fill="#fff"/><rect x="0" y="13.846" width="23" height="1.154" fill="#c8313e"/><rect width="10" height="8" fill="#3c3b6e"/><rect width="10" height="8" fill="#bfc3e0" opacity="0.35"/></svg></div>
<div class="td" style="left:876.5px;top:857px;transform:scaleX(0.9844);transform-origin:0 0;margin-left:27px">United States of ...</div>
<div class="td" style="left:1087.0px;top:857px;color:rgba(0,0,0,0.3);transform:scaleX(1.069);transform-origin:0 0;">N/A</div>
<div class="td" style="left:1326.5px;top:857px;color:rgba(0,0,0,0.3);transform:scaleX(1.069);transform-origin:0 0;">N/A</div>
<div class="td" style="left:1626.5px;top:857px;color:rgba(0,0,0,0.3);transform:scaleX(1.069);transform-origin:0 0;">N/A</div>
<div class="td" style="left:1851.5px;top:857px;transform:scaleX(0.8925);transform-origin:0 0;">RA REVIEW - NOT STARTED</div>
<div class="td" style="left:2227.0px;top:857px;transform:scaleX(0.9398);transform-origin:0 0;">Unassessed (U)</div>
<div class="td" style="left:2422.0px;top:857px;transform:scaleX(0.9346);transform-origin:0 0;">Unassessed</div>
<div class="td" style="left:2617.0px;top:857px;transform:scaleX(0.9398);transform-origin:0 0;">Unassessed (U)</div>
<div class="td" style="left:2812.0px;top:857px;letter-spacing:0px;">0(</div>
<div class="cb" style="top:910px"></div>
<div class="td" style="left:92.0px;top:902px;transform:scaleX(0.8905);transform-origin:0 0;">FIC - GFCT</div>
<div class="td" style="left:377.0px;top:902px;transform:scaleX(1.0017);transform-origin:0 0;">R014 - Suitability and Appropriateness - Client &amp; Product</div>
<div class="abs" style="left:876.5px;top:914px;width:23px;height:15px"><svg width="23" height="15" viewBox="0 0 23 15" style="display:block"><rect width="23" height="15" fill="#012169"/><path d="M0 0 L23 15 M23 0 L0 15" stroke="#fff" stroke-width="3"/><path d="M0 0 L23 15 M23 0 L0 15" stroke="#c8102e" stroke-width="1.2"/><path d="M11.5 0 V15 M0 7.5 H23" stroke="#fff" stroke-width="4.5"/><path d="M11.5 0 V15 M0 7.5 H23" stroke="#c8102e" stroke-width="2.5"/></svg></div>
<div class="td" style="left:876.5px;top:902px;transform:scaleX(1.0115);transform-origin:0 0;margin-left:27px">United Kingdom...</div>
<div class="td" style="left:1087.0px;top:902px;color:rgba(0,0,0,0.3);transform:scaleX(1.069);transform-origin:0 0;">N/A</div>
<div class="td" style="left:1326.5px;top:902px;color:rgba(0,0,0,0.3);transform:scaleX(1.069);transform-origin:0 0;">N/A</div>
<div class="td" style="left:1626.5px;top:902px;color:rgba(0,0,0,0.3);transform:scaleX(1.069);transform-origin:0 0;">N/A</div>
<div class="td" style="left:1851.5px;top:902px;transform:scaleX(0.9608);transform-origin:0 0;">RC - ACCEPTED</div>
<div class="td" style="left:2227.0px;top:902px;transform:scaleX(0.9956);transform-origin:0 0;">Important (MEDU)</div>
<div class="td" style="left:2422.0px;top:902px;transform:scaleX(0.996);transform-origin:0 0;">Mostly Effective</div>
<div class="td" style="left:2617.0px;top:902px;transform:scaleX(0.9347);transform-origin:0 0;">Observed (LR)</div>
<div class="td" style="left:2812.0px;top:902px;letter-spacing:0px;">2(</div>
<div class="cb" style="top:955px"></div>
<div class="td" style="left:92.0px;top:947px;transform:scaleX(0.9787);transform-origin:0 0;">FIC - Global Emerging Markets</div>
<div class="td" style="left:377.0px;top:947px;transform:scaleX(1.0017);transform-origin:0 0;">R014 - Suitability and Appropriateness - Client &amp; Product</div>
<div class="abs" style="left:876.5px;top:959px;width:23px;height:15px"><svg width="23" height="15" viewBox="0 0 23 15" style="display:block"><rect width="23" height="7.5" fill="#ff0000"/><rect y="7.5" width="23" height="7.5" fill="#fff"/></svg></div>
<div class="td" style="left:876.5px;top:947px;transform:scaleX(0.9833);transform-origin:0 0;margin-left:27px">Indonesia (ID)</div>
<div class="td" style="left:1087.0px;top:947px;color:rgba(0,0,0,0.3);transform:scaleX(1.069);transform-origin:0 0;">N/A</div>
<div class="td" style="left:1326.5px;top:947px;color:rgba(0,0,0,0.3);transform:scaleX(1.069);transform-origin:0 0;">N/A</div>
<div class="td" style="left:1626.5px;top:947px;color:rgba(0,0,0,0.3);transform:scaleX(1.069);transform-origin:0 0;">N/A</div>
<div class="td" style="left:1851.5px;top:947px;transform:scaleX(0.9608);transform-origin:0 0;">RC - ACCEPTED</div>
<div class="td" style="left:2227.0px;top:947px;transform:scaleX(0.9754);transform-origin:0 0;">Significant (HP)</div>
<div class="td" style="left:2422.0px;top:947px;transform:scaleX(0.996);transform-origin:0 0;">Mostly Effective</div>
<div class="td" style="left:2617.0px;top:947px;transform:scaleX(0.9956);transform-origin:0 0;">Important (MEDU)</div>
<div class="td" style="left:2812.0px;top:947px;letter-spacing:0px;">2(</div>
<div class="cb" style="top:1000px"></div>
<div class="td" style="left:92.0px;top:992px;transform:scaleX(0.9691);transform-origin:0 0;">CB - CB Central &amp; Functions</div>
<div class="td" style="left:377.0px;top:992px;transform:scaleX(1.0017);transform-origin:0 0;">R014 - Suitability and Appropriateness - Client &amp; Product</div>
<div class="abs" style="left:876.5px;top:1004px;width:23px;height:15px"><svg width="23" height="15" viewBox="0 0 23 15" style="display:block"><rect width="23" height="5" fill="#000"/><rect y="5" width="23" height="5" fill="#dd0000"/><rect y="10" width="23" height="5" fill="#ffce00"/></svg></div>
<div class="td" style="left:876.5px;top:992px;transform:scaleX(0.9416);transform-origin:0 0;margin-left:27px">Germany (DE)</div>
<div class="td" style="left:1087.0px;top:992px;color:rgba(0,0,0,0.3);transform:scaleX(1.069);transform-origin:0 0;">N/A</div>
<div class="td" style="left:1326.5px;top:992px;color:rgba(0,0,0,0.3);transform:scaleX(1.069);transform-origin:0 0;">N/A</div>
<div class="td" style="left:1626.5px;top:992px;color:rgba(0,0,0,0.3);transform:scaleX(1.069);transform-origin:0 0;">N/A</div>
<div class="td" style="left:1851.5px;top:992px;transform:scaleX(0.9608);transform-origin:0 0;">RC - ACCEPTED</div>
<div class="td" style="left:2227.0px;top:992px;transform:scaleX(0.9398);transform-origin:0 0;">Unassessed (U)</div>
<div class="td" style="left:2422.0px;top:992px;transform:scaleX(0.9346);transform-origin:0 0;">Unassessed</div>
<div class="td" style="left:2617.0px;top:992px;transform:scaleX(0.9398);transform-origin:0 0;">Unassessed (U)</div>
<div class="td" style="left:2812.0px;top:992px;letter-spacing:0px;">2(</div>
<div class="cb" style="top:1045px"></div>
<div class="td" style="left:92.0px;top:1037px;transform:scaleX(0.8905);transform-origin:0 0;">FIC - GFCT</div>
<div class="td" style="left:377.0px;top:1037px;transform:scaleX(1.0017);transform-origin:0 0;">R014 - Suitability and Appropriateness - Client &amp; Product</div>
<div class="abs" style="left:876.5px;top:1049px;width:23px;height:15px"><svg width="23" height="15" viewBox="0 0 23 15" style="display:block"><rect x="0" y="0.000" width="23" height="1.154" fill="#c8313e"/><rect x="0" y="1.154" width="23" height="1.154" fill="#fff"/><rect x="0" y="2.308" width="23" height="1.154" fill="#c8313e"/><rect x="0" y="3.462" width="23" height="1.154" fill="#fff"/><rect x="0" y="4.615" width="23" height="1.154" fill="#c8313e"/><rect x="0" y="5.769" width="23" height="1.154" fill="#fff"/><rect x="0" y="6.923" width="23" height="1.154" fill="#c8313e"/><rect x="0" y="8.077" width="23" height="1.154" fill="#fff"/><rect x="0" y="9.231" width="23" height="1.154" fill="#c8313e"/><rect x="0" y="10.385" width="23" height="1.154" fill="#fff"/><rect x="0" y="11.538" width="23" height="1.154" fill="#c8313e"/><rect x="0" y="12.692" width="23" height="1.154" fill="#fff"/><rect x="0" y="13.846" width="23" height="1.154" fill="#c8313e"/><rect width="10" height="8" fill="#3c3b6e"/><rect width="10" height="8" fill="#bfc3e0" opacity="0.35"/></svg></div>
<div class="td" style="left:876.5px;top:1037px;transform:scaleX(0.9844);transform-origin:0 0;margin-left:27px">United States of ...</div>
<div class="td" style="left:1087.0px;top:1037px;color:rgba(0,0,0,0.3);transform:scaleX(1.069);transform-origin:0 0;">N/A</div>
<div class="td" style="left:1326.5px;top:1037px;color:rgba(0,0,0,0.3);transform:scaleX(1.069);transform-origin:0 0;">N/A</div>
<div class="td" style="left:1626.5px;top:1037px;color:rgba(0,0,0,0.3);transform:scaleX(1.069);transform-origin:0 0;">N/A</div>
<div class="td" style="left:1851.5px;top:1037px;transform:scaleX(0.9608);transform-origin:0 0;">RC - ACCEPTED</div>
<div class="td" style="left:2227.0px;top:1037px;transform:scaleX(0.9956);transform-origin:0 0;">Important (MEDU)</div>
<div class="td" style="left:2422.0px;top:1037px;transform:scaleX(0.996);transform-origin:0 0;">Mostly Effective</div>
<div class="td" style="left:2617.0px;top:1037px;transform:scaleX(0.9347);transform-origin:0 0;">Observed (LR)</div>
<div class="td" style="left:2812.0px;top:1037px;letter-spacing:0px;">2(</div>
<div class="cb" style="top:1090px"></div>
<div class="td" style="left:92.0px;top:1082px;transform:scaleX(0.9917);transform-origin:0 0;">Corporate Trading</div>
<div class="td" style="left:377.0px;top:1082px;transform:scaleX(1.0017);transform-origin:0 0;">R014 - Suitability and Appropriateness - Client &amp; Product</div>
<div class="abs" style="left:876.5px;top:1094px;width:23px;height:15px"><svg width="23" height="15" viewBox="0 0 23 15" style="display:block"><rect width="23" height="5" fill="#000"/><rect y="5" width="23" height="5" fill="#dd0000"/><rect y="10" width="23" height="5" fill="#ffce00"/></svg></div>
<div class="td" style="left:876.5px;top:1082px;transform:scaleX(0.9416);transform-origin:0 0;margin-left:27px">Germany (DE)</div>
<div class="td" style="left:1087.0px;top:1082px;color:rgba(0,0,0,0.3);transform:scaleX(1.069);transform-origin:0 0;">N/A</div>
<div class="td" style="left:1326.5px;top:1082px;color:rgba(0,0,0,0.3);transform:scaleX(1.069);transform-origin:0 0;">N/A</div>
<div class="td" style="left:1626.5px;top:1082px;color:rgba(0,0,0,0.3);transform:scaleX(1.069);transform-origin:0 0;">N/A</div>
<div class="td" style="left:1851.5px;top:1082px;transform:scaleX(0.8916);transform-origin:0 0;">RC - NOT STARTED</div>
<div class="td" style="left:2227.0px;top:1082px;transform:scaleX(0.9398);transform-origin:0 0;">Unassessed (U)</div>
<div class="td" style="left:2422.0px;top:1082px;transform:scaleX(0.9346);transform-origin:0 0;">Unassessed</div>
<div class="td" style="left:2617.0px;top:1082px;transform:scaleX(0.9398);transform-origin:0 0;">Unassessed (U)</div>
<div class="td" style="left:2812.0px;top:1082px;letter-spacing:0px;">2(</div>
</div>
<div class="abs" style="left:2839px;top:406px;width:22px;height:1104px;background:#fafafa"></div>
<div class="abs" style="left:2861px;top:314px;width:1px;height:1196px;background:#d6d9dc"></div>
<svg class="abs" style="left:2842px;top:419px" width="16" height="9"><path d="M0.5 8.5 L8 0.5 L15.5 8.5Z" fill="#8a8a8a"/></svg>
<div class="abs" style="left:2843px;top:441px;width:13px;height:25px;background:#8a8a8a;border-radius:6px"></div>
<svg class="abs" style="left:2842px;top:1488px" width="16" height="9"><path d="M0.5 0.5 L8 8.5 L15.5 0.5Z" fill="#8a8a8a"/></svg>
<div class="abs" style="left:14px;top:1510px;width:2825px;height:21px;background:#fafafa"></div>
<svg class="abs" style="left:26px;top:1513px" width="9" height="16"><path d="M8.5 0.5 L0.5 8 L8.5 15.5Z" fill="#8a8a8a"/></svg>
<div class="abs" style="left:48px;top:1514px;width:1879px;height:13px;background:#8a8a8a;border-radius:6.5px"></div>
<svg class="abs" style="left:2818px;top:1513px" width="9" height="16"><path d="M0.5 0.5 L8.5 8 L0.5 15.5Z" fill="#8a8a8a"/></svg>
</body></html>
